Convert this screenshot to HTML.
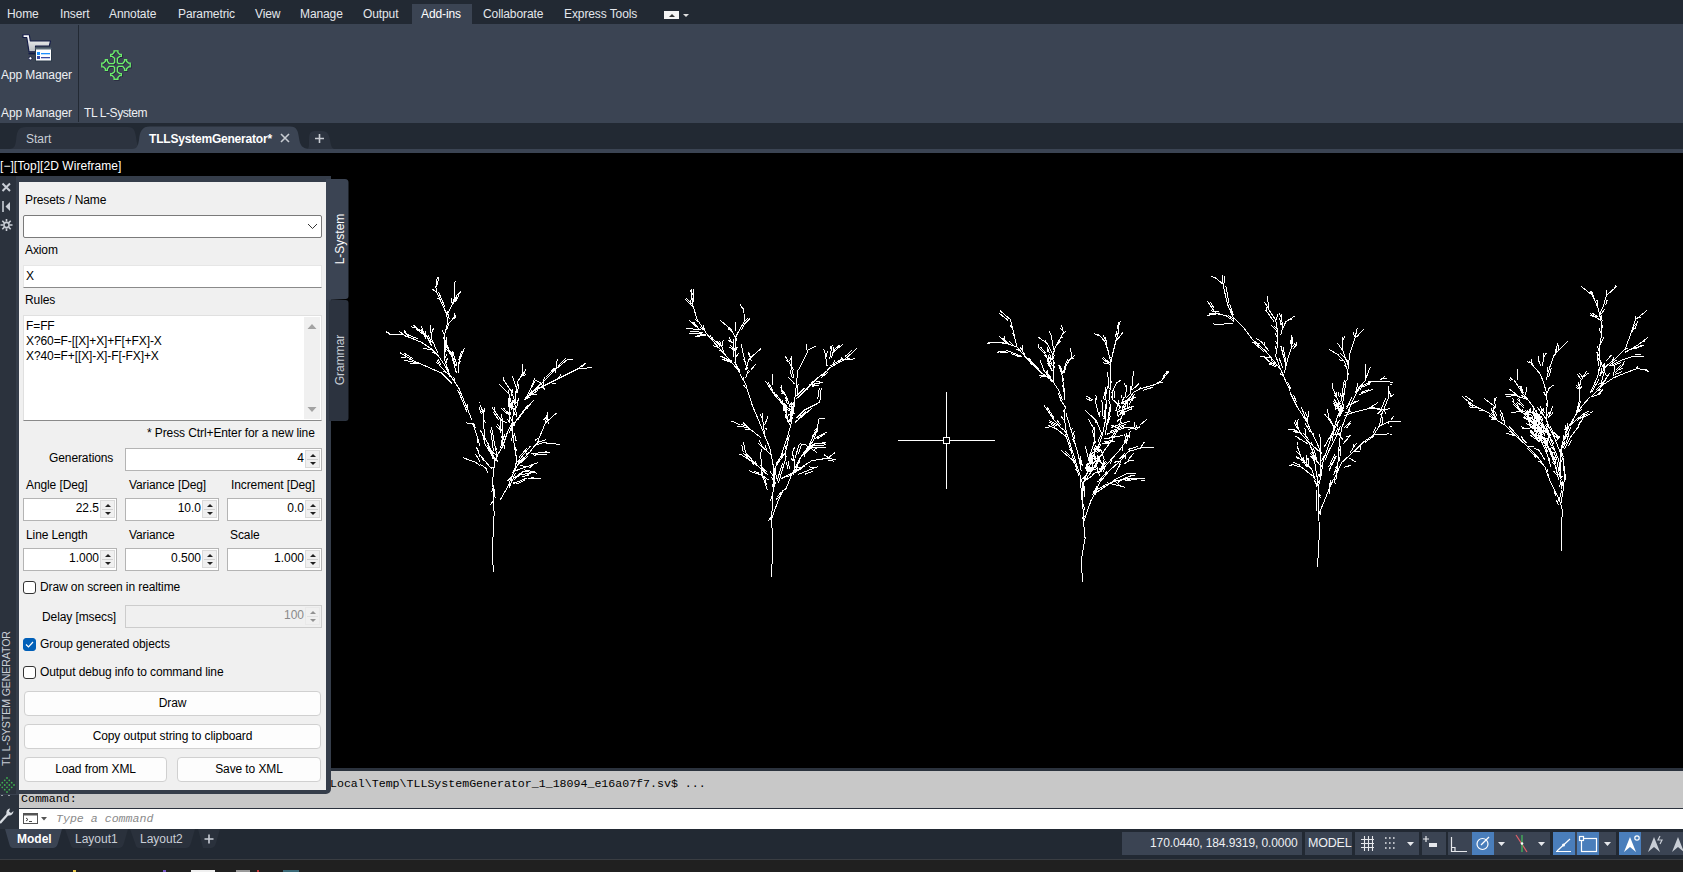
<!DOCTYPE html>
<html><head><meta charset="utf-8">
<style>
*{box-sizing:border-box;margin:0;padding:0}
html,body{width:1683px;height:872px;overflow:hidden;background:#000;font-family:"Liberation Sans",sans-serif;font-size:13px}
.a{position:absolute;white-space:nowrap}
#menubar{position:absolute;left:0;top:0;width:1683px;height:24px;background:#222933}
#menubar .m{position:absolute;top:7px;color:#e4e7ec;font-size:12px;line-height:15px;letter-spacing:-0.1px}
#ribbon{position:absolute;left:0;top:24px;width:1683px;height:99px;background:#3b4453}
#tabbar{position:absolute;left:0;top:123px;width:1683px;height:26px;background:#222933}
#tabline{position:absolute;left:0;top:149px;width:1683px;height:4px;background:#3b4453}
#viewport{position:absolute;left:0;top:153px;width:1683px;height:615px;background:#000}
.lbl{color:#eef0f3;font-size:12px;line-height:15px;letter-spacing:-0.1px}
#pal{position:absolute;left:16px;top:176px;width:315px;height:618px;background:#353d4a;border-radius:0 0 5px 0}
#palstrip{position:absolute;left:0;top:176px;width:16px;height:618px;background:#2b323d}
#palin{position:absolute;left:19px;top:182px;width:307px;height:608px;background:#f0f0f0}
.t{position:absolute;color:#000;font-size:12px;line-height:14px;white-space:nowrap;letter-spacing:-0.1px}
.inp{position:absolute;background:#fff;border:1px solid #b4b4b4}
.spin{position:absolute;width:15px;height:18px;background:#f0f0f0;border:1px solid #dadada}
.spin:before{content:"";position:absolute;left:3.5px;top:2.5px;border-left:3.5px solid transparent;border-right:3.5px solid transparent;border-bottom:3.5px solid #222}
.spin:after{content:"";position:absolute;left:3.5px;top:10.5px;border-left:3.5px solid transparent;border-right:3.5px solid transparent;border-top:3.5px solid #222}
.spin i{position:absolute;left:1px;right:1px;top:8px;height:1px;background:#d0d0d0}
.num{position:absolute;right:17px;top:2px;font-size:12px;line-height:14px;color:#000}
.btn{position:absolute;background:#fdfdfd;border:1px solid #d0d0d0;border-radius:4px;text-align:center;color:#000;font-size:12px;line-height:22px;letter-spacing:-0.1px}
.cb{position:absolute;width:13px;height:13px;border:1px solid #333;border-radius:3px;background:#fff}
.sb{position:absolute;top:832px;height:23px;background:#3b4453}
.ic{position:absolute}
</style></head>
<body>
<div id="menubar">
  <div style="position:absolute;left:412px;top:4px;width:60px;height:20px;background:#3b4453"></div>
  <span class="m" style="left:7px">Home</span>
  <span class="m" style="left:60px">Insert</span>
  <span class="m" style="left:109px">Annotate</span>
  <span class="m" style="left:178px">Parametric</span>
  <span class="m" style="left:255px">View</span>
  <span class="m" style="left:300px">Manage</span>
  <span class="m" style="left:363px">Output</span>
  <span class="m" style="left:421px;color:#fff">Add-ins</span>
  <span class="m" style="left:483px">Collaborate</span>
  <span class="m" style="left:564px">Express Tools</span>
  <div style="position:absolute;left:664px;top:11px;width:15px;height:8px;background:#f4f4f4"></div>
  <div style="position:absolute;left:669px;top:14px;width:0;height:0;border-left:3px solid transparent;border-right:3px solid transparent;border-bottom:3px solid #333"></div>
  <div style="position:absolute;left:683px;top:14px;width:0;height:0;border-left:3px solid transparent;border-right:3px solid transparent;border-top:3px solid #e0e0e0"></div>
</div>
<div id="ribbon"></div>
<div id="ribbonc">
  <svg class="a" style="left:18px;top:30px" width="40" height="36" viewBox="0 0 40 36">
    <defs><linearGradient id="cg" x1="0" y1="0" x2="0" y2="1"><stop offset="0" stop-color="#fff"/><stop offset="1" stop-color="#b8bcc2"/></linearGradient></defs>
    <path d="M5 4.8 L11.3 4.8 L12.3 11 L32.5 11 L31.3 16 L17.5 16 L17.5 21.8 L11 21.8 L8.8 7.5 L5 7.5 Z" fill="url(#cg)" stroke="#141c48" stroke-width="1.1" stroke-linejoin="round"/>
    <path d="M10.5 23.6 H17.5" stroke="#141c48" stroke-width="1.6"/>
    <circle cx="12.4" cy="28.3" r="1.6" fill="#fff" stroke="#141c48" stroke-width="0.9"/>
    <rect x="17.5" y="17.5" width="16" height="13.5" fill="#fff" stroke="#2c3a4a" stroke-width="1"/>
    <rect x="17.5" y="17.5" width="16" height="2" fill="#5c6b7a"/>
    <rect x="19" y="22" width="3" height="3" fill="#1e90ff"/><rect x="23" y="23" width="9" height="1.3" fill="#1e90ff"/>
    <rect x="19" y="26" width="3" height="3" fill="#3a4aa0"/><rect x="23" y="27" width="9" height="1.3" fill="#3a4aa0"/>
  </svg>
  <span class="a lbl" style="left:1px;top:67px;font-size:12px;line-height:16px">App Manager</span>
  <div class="a" style="left:78px;top:25px;width:1px;height:97px;background:#222933"></div>
  <svg class="a" style="left:96px;top:45px" width="40" height="40" viewBox="0 0 40 40"><path d="M18.60 17.40 L18.60 13.30 L16.30 11.40 L14.70 11.40 L14.70 9.40 L16.30 9.40 L18.10 7.50 L18.10 5.80 L21.90 5.80 L21.90 7.50 L23.70 9.40 L25.30 9.40 L25.30 11.40 L23.70 11.40 L21.40 13.30 L21.40 17.40 L22.60 18.60 L26.70 18.60 L28.60 16.30 L28.60 14.70 L30.60 14.70 L30.60 16.30 L32.50 18.10 L34.20 18.10 L34.20 21.90 L32.50 21.90 L30.60 23.70 L30.60 25.30 L28.60 25.30 L28.60 23.70 L26.70 21.40 L22.60 21.40 L21.40 22.60 L21.40 26.70 L23.70 28.60 L25.30 28.60 L25.30 30.60 L23.70 30.60 L21.90 32.50 L21.90 34.20 L18.10 34.20 L18.10 32.50 L16.30 30.60 L14.70 30.60 L14.70 28.60 L16.30 28.60 L18.60 26.70 L18.60 22.60 L17.40 21.40 L13.30 21.40 L11.40 23.70 L11.40 25.30 L9.40 25.30 L9.40 23.70 L7.50 21.90 L5.80 21.90 L5.80 18.10 L7.50 18.10 L9.40 16.30 L9.40 14.70 L11.40 14.70 L11.40 16.30 L13.30 18.60 L17.40 18.60 Z" fill="none" stroke="#1a1530" stroke-width="1.4" transform="translate(0.8,0.8)" opacity="0.6"/><path d="M18.60 17.40 L18.60 13.30 L16.30 11.40 L14.70 11.40 L14.70 9.40 L16.30 9.40 L18.10 7.50 L18.10 5.80 L21.90 5.80 L21.90 7.50 L23.70 9.40 L25.30 9.40 L25.30 11.40 L23.70 11.40 L21.40 13.30 L21.40 17.40 L22.60 18.60 L26.70 18.60 L28.60 16.30 L28.60 14.70 L30.60 14.70 L30.60 16.30 L32.50 18.10 L34.20 18.10 L34.20 21.90 L32.50 21.90 L30.60 23.70 L30.60 25.30 L28.60 25.30 L28.60 23.70 L26.70 21.40 L22.60 21.40 L21.40 22.60 L21.40 26.70 L23.70 28.60 L25.30 28.60 L25.30 30.60 L23.70 30.60 L21.90 32.50 L21.90 34.20 L18.10 34.20 L18.10 32.50 L16.30 30.60 L14.70 30.60 L14.70 28.60 L16.30 28.60 L18.60 26.70 L18.60 22.60 L17.40 21.40 L13.30 21.40 L11.40 23.70 L11.40 25.30 L9.40 25.30 L9.40 23.70 L7.50 21.90 L5.80 21.90 L5.80 18.10 L7.50 18.10 L9.40 16.30 L9.40 14.70 L11.40 14.70 L11.40 16.30 L13.30 18.60 L17.40 18.60 Z" fill="none" stroke="#6cf06c" stroke-width="1.35"/></svg>
  <span class="a lbl" style="left:1px;top:105px;font-size:12px;line-height:16px">App Manager</span>
  <span class="a lbl" style="left:84px;top:105px;font-size:12px;line-height:16px;letter-spacing:-0.4px">TL L-System</span>
</div>

<div id="tabbar"></div>
<svg class="a" style="left:0;top:123px" width="340" height="30" viewBox="0 0 340 30">
  <path d="M8 26 C14 26 15 24 16 18 C17 8 18 4 26 4 L128 4 C134 4 135 8 136 14 C137 22 138 26 145 26 Z" fill="#2c333f"/>
  <path d="M132 26 C137 26 138 23 139 17 C140 8 142 3.5 150 3.5 L290 3.5 C297 3.5 298 8 299 15 C300 22 302 26 310 26 Z" fill="#3b4453"/>
  <path d="M306 26 C309 26 309 24 309 18 C309 10 310 8 316 8 L322 8 C328 8 329 12 330 17 C331 23 332 26 335 26 Z" fill="#2c333f"/>
</svg>
<span class="a" style="left:26px;top:132px;color:#c9ced6;font-size:12px;line-height:15px">Start</span>
<span class="a" style="left:149px;top:132px;color:#fff;font-size:12px;line-height:15px;font-weight:bold;letter-spacing:-0.2px">TLLSystemGenerator*</span>
<svg class="a" style="left:280px;top:133px" width="10" height="10" viewBox="0 0 10 10"><path d="M1 1 L9 9 M9 1 L1 9" stroke="#c8ccd2" stroke-width="1.6"/></svg>
<svg class="a" style="left:314px;top:133px" width="11" height="11" viewBox="0 0 11 11"><path d="M5.5 1 V10 M1 5.5 H10" stroke="#c8ccd2" stroke-width="1.6"/></svg>

<div id="tabline"></div>
<div id="viewport"></div>
<span class="a" style="left:0px;top:159px;color:#fff;font-size:12px;line-height:15px;letter-spacing:0.05px">[−][Top][2D Wireframe]</span>
<svg class="a" style="left:0;top:0" width="1683" height="768" viewBox="0 0 1683 768">
  <path d="M898 440.5 H995 M946.5 392 V489" stroke="#fff" stroke-width="1" shape-rendering="crispEdges"/>
  <rect x="943.5" y="437.5" width="6" height="6" fill="#000" stroke="#fff" stroke-width="1" shape-rendering="crispEdges"/>
  <path d="M437.3 276.5 L435.9 287.2 L436.8 292.4 L446.2 313.0 L447.9 321.6 L445.0 332.8 L444.5 359.4 L448.8 373.2 L459.1 388.7 L472.0 420.0 M432.5 289.3 L436.8 292.4 M454.3 285.1 L455.0 295.8 L452.2 304.4 L447.9 313.0 M457.4 294.1 L453.1 303.5 M455.7 315.6 L448.8 323.3 M388.6 335.0 L402.4 334.5 L421.3 342.2 L431.6 349.1 L438.5 356.0 L445.4 366.3 L450.5 376.6 M398.9 331.1 L405.8 336.2 M404.1 330.2 L408.4 336.2 M412.7 324.7 L426.4 335.4 L431.6 345.7 M421.3 325.9 L425.6 338.8 M430.2 325.4 L431.6 338.8 L437.6 352.6 M423.0 348.3 L431.6 350.0 M399.8 352.6 L414.4 361.2 L441.9 373.2 L452.2 383.5 M404.1 360.3 L417.8 362.9 M410.1 363.7 L418.7 363.7 M464.3 348.3 L459.1 361.2 L458.3 373.2 M444.5 338.8 L452.2 357.7 L456.5 373.2 M450.5 350.8 L455.7 366.3 M436.8 359.4 L440.2 366.3 L448.8 374.9 M592.4 367.5 L577.8 368.9 L552.0 381.8 L534.8 390.4 L525.2 400.0 M585.5 363.4 L576.1 369.8 M567.5 359.4 L557.2 368.0 L545.1 380.1 L529.6 393.8 M557.2 359.4 L555.4 373.2 M534.8 378.4 L531.4 387.0 L524.8 400.0 M540.0 381.8 L545.1 390.4 M534.8 388.7 L543.4 387.0 M526.2 397.3 L538.2 390.4 M522.4 364.3 L522.8 373.2 L517.6 381.8 L515.9 393.8 L514.9 400.0 M526.2 369.4 L521.0 376.6 M498.7 383.5 L509.0 393.8 L510.5 400.0 M503.8 380.1 L510.7 390.4 M512.4 375.8 L515.9 387.0 M479.8 402.4 L480.0 403.1 M493.4 571.9 L492.3 552.1 L494.1 513.6 L493.6 500.0 M480.0 445.7 L472.7 422.8 M462.6 457.6 L475.4 462.2 L480.0 465.6 M475.4 453.9 L480.0 461.4 M476.3 446.6 L480.0 456.7 M466.2 422.8 L475.4 424.6 M500.1 500.0 L507.5 487.2 L514.4 471.1 L517.8 464.2 L529.3 452.8 L537.3 442.4 L545.4 422.9 L547.7 412.0 M545.4 422.9 L556.3 413.2 M537.3 442.4 L546.5 439.6 M536.2 444.7 L544.2 442.4 L548.8 443.6 L559.7 444.2 M530.5 453.3 L550.5 452.5 M517.8 461.9 L530.5 445.9 M517.8 464.2 L528.2 456.2 M514.4 471.1 L538.5 462.5 M511.0 480.3 L523.6 471.1 L536.8 473.2 M513.3 483.7 L527.0 478.0 L540.8 478.3 M520.1 474.5 L530.5 473.4 M514.4 471.1 L516.7 459.6 L514.4 445.9 L512.1 428.7 L513.3 411.5 L512.1 400.0 M511.0 428.7 L517.8 418.3 L533.9 400.0 M517.8 418.3 L528.2 404.6 M493.8 500.0 L492.6 480.3 L494.9 459.6 L502.9 445.9 L507.5 432.1 L512.1 422.9 M494.9 459.6 L488.0 443.6 L480.0 429.8 M494.9 459.6 L484.6 443.6 L483.4 413.8 L485.2 407.5 M480.0 404.6 L483.4 413.8 M491.5 468.8 L480.0 455.0 M486.9 468.8 L480.0 464.2 M497.2 457.3 L491.5 427.5 M500.6 448.2 L502.9 434.4 L501.8 413.8 M497.2 424.1 L502.9 431.0 M492.0 407.5 L500.6 419.5 L506.4 422.9 M501.2 408.6 L507.5 413.8 M508.7 400.0 L509.8 422.9 M514.4 400.0 L516.7 417.2 M507.5 411.5 L514.4 426.4 M693.4 289.5 L692.9 305.8 L697.2 319.6 L707.5 335.0 L723.0 352.3 L733.3 364.3 L740.0 372.6 M685.2 298.9 L692.9 306.7 M689.5 320.4 L698.9 329.0 M686.0 328.2 L700.6 329.9 M689.5 333.3 L705.8 334.2 M695.5 336.8 L705.8 335.0 M719.6 341.1 L723.9 352.3 M719.6 355.7 L731.6 360.9 M722.1 359.1 L731.6 362.6 M743.7 308.4 L744.5 321.3 L738.5 331.6 L735.9 336.8 L735.0 362.6 L740.0 372.5 M749.7 318.7 L743.7 324.7 M720.4 320.4 L731.6 329.9 L735.0 336.8 M735.9 322.1 L735.0 331.6 M728.2 340.2 L734.2 343.7 M729.9 345.4 L735.0 348.8 M741.1 344.5 L746.2 366.0 L745.9 370.0 M760.9 348.8 L748.8 359.1 L746.2 369.5 M755.7 364.3 L750.9 370.0 M748.8 352.3 L751.4 360.9 M731.6 421.1 L740.0 424.8 M791.8 370.0 L791.8 355.7 M784.9 355.7 L793.5 369.5 L793.6 370.0 M806.4 344.5 L807.3 352.3 L798.7 369.5 L798.6 370.0 M815.9 346.2 L807.3 350.5 M856.8 348.5 L845.1 359.1 L829.7 367.7 L827.4 370.0 M855.5 358.8 L840.0 360.0 L830.5 366.0 M842.6 344.5 L833.1 352.3 M832.2 344.5 L829.7 359.1 M824.5 349.7 L827.1 366.0 M771.5 577.1 L772.9 541.8 L771.5 519.5 L772.9 495.4 L773.1 490.0 M771.5 519.5 L778.1 500.5 L783.3 490.0 M739.3 454.1 L740.0 454.4 M740.0 374.1 L745.5 383.8 L752.4 405.8 L760.6 425.0 L764.8 436.1 L769.6 447.1 L773.0 463.6 L773.7 490.0 M748.3 370.0 L745.5 378.3 M740.0 426.4 L748.3 427.8 L760.6 437.4 M742.8 422.3 L748.3 427.8 M762.0 413.3 L764.8 436.1 M768.2 415.4 L764.8 425.0 M765.5 427.8 L767.5 430.5 M757.9 442.9 L771.6 455.3 M743.4 442.2 L745.5 452.6 L755.1 463.6 L767.5 474.6 M740.0 453.9 L755.1 463.6 M751.0 471.8 L760.6 474.6 L768.9 480.1 M760.6 452.6 L762.0 474.6 L767.5 490.0 M773.7 490.0 L775.8 466.3 L781.3 455.3 L786.8 438.8 L790.9 425.0 L792.3 411.3 L795.0 397.5 L796.4 383.8 L797.8 370.0 M775.8 466.3 L785.4 452.6 L789.5 434.7 M765.5 381.0 L774.4 394.8 L782.7 404.4 L786.8 415.4 L789.5 425.0 M772.3 374.1 L773.0 385.1 M779.9 386.5 L786.8 397.5 L789.5 405.8 M781.3 390.6 L785.4 393.4 M788.2 376.9 L794.4 383.8 M792.3 370.0 L793.7 378.3 M796.4 398.9 L806.1 389.3 L817.1 378.3 L828.1 370.0 M808.8 385.1 L822.6 382.4 M796.4 418.2 L804.7 409.9 L819.8 402.3 M819.8 402.3 L821.2 387.9 M795.0 422.3 L811.6 408.5 M785.4 490.0 L792.3 473.2 L799.2 459.4 L807.4 449.8 L814.3 438.8 L817.1 429.2 L819.1 418.2 M819.1 418.2 L825.3 418.2 M814.3 438.8 L826.7 431.9 M811.6 444.3 L826.0 442.9 M808.8 447.1 L826.0 447.5 M807.4 449.8 L814.3 433.3 L818.4 430.5 M799.2 459.4 L804.7 451.2 L810.2 445.0 M792.3 473.2 L811.6 460.8 L828.1 458.1 L836.3 460.1 M828.1 458.1 L834.9 452.6 M797.8 474.6 L818.4 466.3 M781.3 478.7 L804.7 466.3 M792.3 452.6 L795.0 463.6 L793.7 474.6 M788.2 460.8 L789.5 469.1 M799.2 444.3 L795.0 458.1 M778.5 482.8 L785.4 459.4 L785.4 452.6 M784.0 403.0 L788.2 422.3 M792.3 403.0 L789.5 422.3 M785.4 408.5 L795.0 414.0 M804.7 444.3 L817.1 452.6 M806.1 452.6 L815.7 442.9 M1000.1 310.8 L1010.5 319.6 L1012.1 326.1 L1016.9 346.9 L1026.5 358.2 L1041.0 372.6 L1052.2 380.6 L1058.7 390.3 L1062.4 400.0 M988.0 342.1 L1004.1 342.9 L1016.9 346.9 M999.3 336.5 L1007.3 343.7 M998.5 351.4 L1008.1 350.9 L1021.7 356.5 M1002.5 338.1 L1010.5 345.3 M1020.1 346.9 L1024.9 354.9 M1038.6 337.3 L1047.4 343.7 L1052.2 353.3 L1053.8 366.2 L1053.8 382.2 M1050.6 332.5 L1053.8 350.1 M1061.4 325.2 L1063.5 332.5 L1055.4 346.9 L1053.0 354.9 M1038.6 347.7 L1045.8 354.9 L1052.2 371.0 M1040.2 360.6 L1044.2 371.0 L1050.6 379.0 M1070.7 347.7 L1071.5 358.2 L1065.1 366.2 L1062.7 374.2 M1074.7 355.7 L1067.5 361.4 M1058.7 364.6 L1061.9 374.2 L1064.3 390.3 L1064.3 400.0 M1039.4 375.0 L1050.6 377.4 M1118.4 322.0 L1118.8 330.9 L1116.4 338.9 L1112.4 354.9 L1110.0 367.8 L1110.0 390.3 L1109.0 400.0 M1122.9 332.5 L1118.0 338.9 M1098.5 334.1 L1105.2 342.1 L1108.4 351.7 L1110.8 363.0 M1105.2 337.3 L1106.8 343.7 M1102.0 358.2 L1110.0 364.6 M1117.2 381.4 L1111.6 393.5 M1107.6 386.2 L1104.9 400.0 M1112.4 390.3 L1112.4 400.0 M1085.9 395.9 L1093.0 400.0 M1095.9 395.1 L1096.5 400.0 M1169.4 370.7 L1161.4 380.6 L1155.0 384.6 L1140.5 388.7 L1134.1 391.9 L1127.7 399.9 L1127.6 400.0 M1161.4 382.2 L1151.7 385.4 M1133.3 371.0 L1132.5 383.8 L1130.1 393.5 M1138.9 383.8 L1131.7 390.3 M1126.9 385.4 L1125.3 396.7 M1146.6 419.5 L1140.0 425.1 M1144.5 441.6 L1140.5 448.0 L1140.0 448.1 M1154.2 447.2 L1140.5 448.0 M1121.3 399.9 L1121.2 400.0 M1124.5 396.7 L1122.8 400.0 M1082.4 581.6 L1081.4 559.1 L1085.1 538.3 L1083.5 522.2 L1082.7 501.4 L1082.6 500.0 M1083.5 522.2 L1091.2 500.0 M1145.3 478.6 L1140.0 478.6 M1060.6 400.0 L1065.2 406.9 L1064.1 417.2 L1066.4 432.1 L1073.3 453.9 L1080.1 475.7 L1081.9 500.0 M1044.0 405.2 L1053.8 419.5 L1060.6 427.5 L1066.4 432.1 M1049.2 420.6 L1059.5 425.8 M1048.0 425.2 L1056.1 428.7 L1066.4 436.7 M1065.8 412.6 L1077.8 452.8 L1081.3 471.1 M1061.2 450.5 L1072.1 459.6 L1077.8 468.8 M1072.1 455.0 L1079.0 475.7 M1082.4 500.0 L1083.6 482.6 L1089.3 466.5 L1095.0 451.6 L1099.6 443.6 L1102.5 434.4 L1105.4 420.6 L1106.5 400.0 M1085.3 410.3 L1096.2 420.6 L1101.9 434.4 M1088.2 418.9 L1093.9 428.7 L1095.0 439.0 L1090.5 453.9 M1095.0 400.0 L1097.3 409.2 L1099.6 417.2 M1085.3 446.4 L1089.3 461.9 M1101.9 400.0 L1103.1 417.2 M1093.9 450.5 L1097.3 468.8 L1099.6 475.7 M1100.8 449.3 L1104.2 459.6 L1099.6 473.4 M1108.8 400.0 L1111.1 406.9 L1108.8 417.2 L1107.7 425.2 M1083.6 482.6 L1091.6 471.1 L1101.9 453.9 L1111.1 441.3 L1118.0 429.8 L1122.6 413.8 L1127.2 400.0 M1122.6 410.3 L1133.5 406.3 M1111.1 427.5 L1129.4 421.2 M1106.5 434.4 L1124.9 427.5 L1135.2 428.1 M1104.2 439.0 L1122.6 435.6 M1102.5 443.6 L1114.5 441.3 M1134.0 424.1 L1135.8 429.8 L1139.8 426.9 M1091.6 500.0 L1099.6 482.6 L1108.8 471.1 L1120.3 460.8 L1128.3 451.6 L1139.8 448.2 M1099.6 472.2 L1111.1 459.6 L1120.3 449.3 L1127.2 439.0 L1130.6 431.0 M1126.6 433.3 L1124.9 443.6 M1134.0 452.8 L1128.3 459.6 M1128.3 460.2 L1134.0 460.2 M1120.3 464.2 L1114.5 474.5 M1093.9 494.0 L1111.1 482.6 L1122.6 479.1 L1139.8 478.6 M1106.5 482.6 L1124.9 487.2 M1113.4 480.3 L1126.0 474.0 L1135.8 473.4 M1122.6 479.1 L1131.7 475.7 M1090.5 457.3 L1099.6 461.9 M1088.2 468.8 L1097.3 466.5 M1091.6 474.5 L1099.6 471.1 M1085.9 480.3 L1093.9 474.5 M1097.3 455.0 L1101.9 464.2 M1113.4 400.0 L1120.3 406.9 M1119.1 400.0 L1115.7 411.5 M1222.4 275.2 L1223.2 285.5 L1227.5 304.4 L1232.7 316.4 L1243.0 326.8 L1253.3 340.5 L1265.4 350.8 L1274.0 361.2 L1280.8 369.8 L1286.0 381.8 L1290.0 390.5 M1214.6 276.9 L1222.4 283.8 M1207.2 301.0 L1215.5 313.0 L1225.8 315.6 L1234.4 321.6 M1208.6 313.0 L1222.4 314.4 M1216.3 324.7 L1232.7 323.3 M1251.6 342.2 L1260.2 344.0 M1261.1 341.4 L1268.8 350.8 M1260.2 356.5 L1270.5 357.7 M1264.5 356.9 L1268.8 361.2 L1277.4 366.3 M1267.4 295.8 L1268.8 309.6 L1275.7 319.9 L1277.4 330.2 L1277.4 345.7 L1275.7 356.0 L1280.8 369.8 L1284.3 376.6 M1264.5 301.8 L1268.8 309.6 M1265.4 309.6 L1274.0 321.6 M1281.2 314.4 L1282.6 326.8 L1280.8 335.4 M1295.5 315.6 L1286.0 321.6 L1282.6 328.5 M1271.4 325.0 L1277.4 331.9 M1291.2 335.4 L1292.0 345.7 L1287.7 359.4 L1284.3 373.2 M1297.2 344.0 L1292.9 349.1 M1280.8 345.7 L1286.0 366.3 M1357.4 327.6 L1354.8 338.8 L1349.6 354.3 L1347.9 369.8 L1347.1 380.0 M1364.3 328.5 L1356.5 337.1 M1342.4 337.1 L1342.8 350.8 L1347.9 364.6 M1337.6 343.1 L1342.8 350.8 M1329.0 349.5 L1337.6 354.3 L1344.5 361.2 L1347.9 371.5 M1384.9 376.6 L1379.9 380.0 M1392.6 382.7 L1390.0 382.5 M1365.1 363.7 L1366.0 378.4 L1365.4 380.0 M1370.3 367.2 L1365.2 380.0 M1394.4 393.8 L1390.0 397.1 M1393.5 416.2 L1390.9 420.0 M1317.5 567.1 L1319.5 531.8 L1318.7 514.6 L1318.7 488.8 L1317.2 480.0 M1318.7 514.6 L1330.7 485.4 L1333.1 480.0 M1318.7 488.8 L1319.3 480.0 M1330.7 485.4 L1330.3 480.0 M1390.0 421.7 L1401.2 421.4 M1391.8 434.6 L1390.0 434.5 M1391.8 426.0 L1390.0 426.6 M1314.3 480.0 L1317.0 485.4 M1290.0 392.6 L1296.9 406.4 L1307.2 422.4 L1312.9 435.0 L1317.5 444.2 L1321.0 453.4 L1320.4 480.0 M1301.5 407.5 L1307.2 422.4 M1308.9 411.0 L1307.2 422.4 M1295.2 420.1 L1300.3 432.8 L1308.3 441.9 L1316.4 448.8 M1293.4 429.3 L1301.5 433.9 M1295.7 436.2 L1308.3 444.2 M1304.9 428.2 L1306.1 437.3 M1308.3 440.8 L1312.9 451.1 M1296.9 445.4 L1301.5 458.0 L1311.8 469.4 L1315.2 480.0 M1296.3 456.3 L1304.9 462.6 M1291.1 464.3 L1301.5 467.2 L1311.8 475.2 M1306.1 455.1 L1307.2 467.2 M1319.8 433.9 L1321.0 453.4 M1315.8 448.8 L1322.1 453.4 M1312.9 451.1 L1317.5 480.0 M1320.4 480.0 L1323.3 460.3 L1329.0 444.2 L1333.6 430.5 L1337.0 417.8 L1342.8 402.9 L1346.2 380.0 M1324.4 413.8 L1332.4 423.6 L1334.7 430.5 M1327.3 409.2 L1329.0 417.8 L1332.4 423.6 M1332.4 387.5 L1338.2 400.6 L1339.3 414.4 M1335.9 391.5 L1337.0 398.3 M1340.5 392.6 L1341.6 400.6 M1333.6 400.6 L1335.9 408.7 M1324.4 446.5 L1333.6 430.5 L1339.3 420.1 M1327.8 453.4 L1335.9 437.3 L1340.5 425.9 M1329.0 470.6 L1335.9 455.7 M1335.9 480.0 L1338.2 460.3 L1339.3 441.9 L1341.6 428.2 L1347.3 413.3 L1354.2 397.2 L1360.0 386.9 L1365.7 380.0 M1357.7 383.4 L1355.9 392.6 M1360.0 386.9 L1372.6 381.1 L1390.0 381.1 M1358.8 394.9 L1372.6 389.2 M1346.2 406.4 L1358.8 400.6 M1343.9 428.2 L1351.4 420.7 M1342.8 444.2 L1350.8 435.0 M1343.9 415.6 L1354.2 412.1 L1368.0 408.7 L1378.3 402.4 M1368.0 408.7 L1381.7 409.2 M1330.1 463.7 L1334.7 454.5 M1333.6 480.0 L1341.6 462.6 L1354.2 451.1 L1363.4 441.9 L1373.7 435.0 L1379.4 425.9 L1389.8 421.3 M1373.7 435.0 L1388.6 433.9 M1379.4 425.9 L1381.7 414.4 L1388.6 397.2 L1388.6 385.7 M1381.7 409.8 L1390.0 408.7 M1354.2 451.1 L1360.0 451.1 M1349.6 458.0 L1355.4 462.0 M1343.9 467.2 L1350.8 465.4 M1356.5 443.1 L1349.6 453.4 M1333.6 402.9 L1342.8 412.1 M1334.7 409.8 L1341.6 405.2 M1335.9 430.5 L1342.8 439.6 M1337.0 435.0 L1341.6 431.6 M1309.5 444.2 L1316.4 460.3 M1310.6 453.4 L1319.8 464.9 M1581.4 286.5 L1592.6 295.5 L1597.8 307.5 L1601.2 321.3 L1601.2 336.8 L1599.5 348.8 L1600.3 366.0 L1597.8 376.3 L1590.9 391.8 L1590.0 393.4 M1616.7 286.5 L1606.4 295.5 L1602.9 307.5 L1599.5 314.4 M1606.4 289.5 L1606.4 297.2 M1591.7 291.2 L1594.3 298.9 M1596.9 299.8 L1597.8 305.8 M1590.0 313.5 L1599.5 319.6 M1603.8 337.6 L1599.5 345.4 M1596.9 345.4 L1599.5 352.2 M1646.8 310.6 L1635.6 319.6 L1632.2 329.9 L1625.3 348.8 L1616.7 357.4 L1606.4 366.0 L1599.5 376.3 M1635.6 316.1 L1635.6 321.3 M1647.6 337.6 L1637.3 345.4 L1625.3 352.2 M1644.2 345.4 L1627.0 350.5 M1644.2 356.5 L1632.2 356.5 L1620.1 360.8 L1609.8 366.0 M1611.5 354.8 L1606.4 360.8 M1648.5 370.3 L1637.3 368.6 L1625.3 372.9 L1613.2 378.0 L1602.9 384.9 L1590.9 397.0 M1638.2 365.7 L1635.6 369.4 M1624.4 363.9 L1615.0 372.9 M1615.0 366.0 L1613.2 376.3 M1601.2 393.5 L1590.9 397.0 M1592.6 411.6 L1590.0 412.7 M1604.6 369.4 L1601.2 383.2 M1609.8 372.9 L1602.9 383.2 L1596.0 390.1 M1606.4 379.8 L1597.8 384.9 M1601.2 362.6 L1606.4 376.3 M1586.6 371.2 L1581.4 379.8 L1581.4 380.0 M1577.5 374.3 L1581.4 379.8 M1567.7 341.4 L1558.2 350.5 L1553.9 355.7 L1549.6 367.7 L1546.2 379.8 L1546.1 380.0 M1557.3 342.8 L1556.5 352.2 M1528.6 360.5 L1539.3 372.9 L1542.8 380.0 M1543.6 353.1 L1542.7 366.0 M1537.6 359.5 L1541.0 366.0 M1517.3 368.6 L1517.7 380.0 M1510.0 377.7 L1512.8 380.0 M1462.2 396.6 L1473.9 405.6 L1490.0 413.6 M1468.8 406.9 L1479.1 408.1 M1483.4 397.8 L1490.0 402.8 M1561.6 550.7 L1561.6 521.5 L1562.5 511.2 L1560.8 504.3 L1558.2 497.4 L1549.5 480.0 M1560.8 504.3 L1563.4 488.8 L1564.2 480.0 M1561.6 488.8 L1560.8 480.0 M1490.0 414.4 L1496.9 420.1 L1506.1 425.9 L1518.7 438.5 L1527.8 446.5 L1539.3 459.1 L1545.0 467.2 L1549.6 480.0 M1494.6 398.3 L1495.2 406.4 L1492.3 413.3 M1490.0 402.9 L1494.6 406.4 M1491.1 408.7 L1496.9 420.1 M1502.0 413.3 L1504.9 423.6 M1506.1 433.3 L1516.4 436.2 M1521.0 436.2 L1524.4 440.8 M1527.8 446.5 L1533.6 446.5 M1514.1 380.0 L1522.1 392.6 L1527.8 399.5 L1533.6 407.5 L1539.3 416.7 L1543.9 425.9 L1549.6 437.3 L1554.2 448.8 L1558.8 460.3 L1561.1 480.0 M1509.5 389.2 L1519.8 397.2 L1527.8 399.5 M1504.9 394.9 L1516.4 394.9 M1521.0 386.3 L1523.3 392.6 M1526.7 386.9 L1525.6 394.9 M1512.4 401.2 L1524.4 414.4 L1529.0 419.0 M1517.5 399.5 L1524.4 406.4 M1511.2 412.7 L1523.3 411.0 L1530.1 414.4 M1522.1 428.7 L1530.1 428.2 M1525.6 423.6 L1535.9 425.9 M1526.7 413.3 L1533.6 423.6 L1539.3 432.8 L1547.3 444.2 L1551.9 454.5 L1555.4 466.0 L1558.8 480.0 M1531.3 416.7 L1538.2 428.2 L1543.9 439.6 L1549.6 451.1 L1554.2 462.6 M1533.6 414.4 L1541.6 423.6 L1547.3 432.8 L1554.2 444.2 M1535.9 432.8 L1542.8 444.2 L1547.3 454.5 L1550.8 467.2 M1539.3 425.9 L1545.0 435.0 M1530.1 431.6 L1538.2 439.6 M1538.2 448.8 L1545.0 460.3 M1542.8 380.0 L1546.2 391.5 L1547.3 402.9 L1546.2 419.0 L1548.5 425.9 L1554.2 437.3 L1558.8 448.8 L1563.4 460.3 L1565.7 480.0 M1549.6 386.9 L1546.8 393.8 M1552.5 406.4 L1548.5 417.8 M1540.5 406.4 L1542.8 414.4 L1546.2 419.0 M1537.0 406.9 L1542.8 414.4 M1554.2 432.8 L1558.8 437.3 M1560.0 436.2 L1555.4 441.9 M1580.6 380.0 L1579.4 389.2 L1579.4 400.6 L1576.0 414.4 L1569.1 425.9 L1563.4 439.6 L1561.1 448.8 L1560.0 480.0 M1576.6 385.2 L1579.4 389.2 M1589.8 397.2 L1581.7 406.4 L1576.0 414.4 M1588.6 411.0 L1582.9 414.4 L1576.0 420.1 L1570.3 425.9 M1589.8 414.4 L1581.7 417.8 M1568.0 423.6 L1565.7 432.8 M1585.2 414.4 L1577.2 428.2 L1570.3 437.3 L1564.5 448.8 M1565.7 444.2 L1569.1 432.8 M1563.4 460.3 L1564.5 480.0" stroke="#fff" stroke-width="1" fill="none" stroke-linejoin="round" shape-rendering="crispEdges"/><path d="M439.0 276.9 L436.6 286.8 M438.6 292.1 L444.7 306.6 M448.5 314.1 L449.1 319.0 M449.3 322.5 L446.7 330.2 M446.6 337.2 L445.2 352.0 M458.5 391.6 L467.3 412.5 M440.3 300.0 L437.3 298.0 M446.8 315.9 L447.5 311.5 M444.5 358.9 L446.9 353.8 M444.7 350.4 L446.3 346.1 M444.9 341.0 L442.6 336.5 M444.9 336.6 L442.5 330.4 M445.8 363.6 L447.6 357.6 M454.3 381.4 L453.9 376.9 M452.0 377.9 L448.9 375.5 M467.7 409.5 L468.0 404.1 M461.6 394.6 L456.9 390.2 M454.3 285.2 L455.3 281.0 M452.2 304.4 L451.3 297.7 M459.0 295.3 L455.2 301.9 M454.9 299.5 L458.1 296.7 M456.9 295.3 L461.2 291.5 M452.1 319.6 L456.5 316.9 M454.1 317.4 L454.9 313.4 M407.5 334.6 L417.8 338.9 M391.9 334.9 L385.8 331.6 M409.0 337.2 L404.3 332.4 M436.9 354.4 L432.4 352.4 M448.2 371.9 L448.5 368.6 M415.8 328.8 L424.7 335.5 M427.9 335.1 L431.7 342.4 M422.6 332.4 L420.9 328.4 M417.2 328.2 L410.6 326.8 M425.0 337.2 L425.7 331.2 M431.1 333.8 L433.6 328.1 M433.3 342.7 L428.1 339.4 M403.9 352.9 L413.0 358.8 M411.7 359.6 L408.6 358.8 M407.3 357.0 L400.7 357.1 M410.5 361.4 L416.4 362.9 M418.1 363.7 L412.5 360.2 M461.6 351.2 L458.5 360.4 M458.9 364.6 L460.5 361.2 M444.7 342.4 L450.6 354.8 M448.4 348.3 L445.5 346.6 M448.3 348.1 L446.0 345.4 M453.5 362.1 L454.3 358.9 M452.3 350.6 L457.0 365.5 M454.2 361.9 L452.1 359.1 M452.2 356.0 L453.5 352.1 M451.3 353.3 L445.7 349.3 M438.4 359.4 L440.8 364.5 M439.0 363.9 L436.2 362.5 M446.6 372.7 L442.9 371.4 M558.3 378.6 L561.3 373.6 M535.5 390.0 L539.3 384.7 M550.1 382.8 L555.7 383.5 M526.4 398.8 L529.6 396.9 M530.0 395.2 L536.8 394.2 M580.6 366.7 L584.2 365.7 M565.7 358.5 L558.3 366.0 M554.3 368.1 L546.4 377.0 M566.9 359.9 L572.7 359.1 M551.6 373.6 L554.9 368.2 M543.3 381.7 L544.7 376.6 M535.3 380.5 L532.1 387.2 M531.8 390.5 L526.4 398.9 M543.2 387.2 L543.4 380.8 M540.6 382.8 L534.5 379.6 M518.9 384.4 L517.4 392.8 M520.7 376.6 L524.7 373.4 M515.8 394.5 L515.1 391.2 M521.4 376.1 L525.8 374.7 M508.5 393.4 L508.0 389.9 M504.2 380.6 L503.5 377.0 M493.6 500.4 L490.5 504.8 M472.7 423.0 L475.7 427.8 M478.1 439.8 L477.6 443.5 M478.7 453.0 L479.1 449.5 M509.7 486.4 L515.6 472.7 M521.0 463.0 L526.8 456.9 M547.5 421.5 L547.9 414.8 M512.1 476.6 L507.8 480.8 M509.2 483.3 L509.4 488.5 M529.7 452.2 L525.6 454.6 M539.3 437.7 L535.0 440.3 M546.6 417.1 L543.6 419.7 M546.3 418.3 L548.7 423.7 M539.3 441.8 L537.1 444.0 M534.0 455.1 L546.9 454.3 M549.0 452.6 L544.9 451.3 M537.9 453.0 L533.4 454.3 M518.9 457.5 L527.5 447.6 M527.2 450.0 L523.1 451.6 M520.1 459.1 L517.7 465.5 M517.6 462.5 L526.9 455.4 M521.9 461.1 L518.6 461.2 M533.6 464.3 L529.3 468.2 M526.7 466.7 L519.8 465.4 M514.2 479.5 L521.7 473.4 M524.1 469.9 L534.7 471.8 M516.1 484.1 L525.1 480.2 M515.8 482.6 L512.7 483.1 M534.4 478.2 L531.4 477.1 M522.3 476.8 L528.4 475.1 M530.4 473.4 L526.7 474.7 M516.2 441.4 L514.5 433.0 M511.2 410.5 L511.1 402.5 M516.5 460.8 L516.9 464.0 M514.9 468.5 L512.7 472.7 M514.5 446.4 L516.6 450.5 M513.0 435.2 L511.0 440.5 M512.2 427.8 L510.6 431.5 M512.3 401.5 L511.4 405.4 M513.2 410.8 L515.2 414.9 M515.1 422.5 L511.8 423.6 M520.7 415.1 L518.2 419.9 M527.9 404.9 L527.0 408.9 M495.1 497.7 L493.6 485.3 M501.4 443.5 L504.8 434.4 M509.3 432.8 L512.0 426.1 M493.1 487.9 L491.7 491.8 M503.6 444.0 L505.0 448.5 M511.8 423.5 L511.4 430.0 M493.4 459.4 L487.7 444.9 M491.1 450.8 L496.2 455.2 M493.7 456.9 L498.1 461.5 M482.4 434.0 L484.3 440.4 M481.8 412.1 L483.3 408.5 M487.8 448.6 L490.7 450.6 M490.5 452.8 L494.3 456.4 M483.6 418.8 L485.6 423.2 M484.5 409.9 L481.5 413.6 M478.8 406.5 L481.3 413.4 M481.4 456.7 L483.4 461.0 M490.1 467.1 L494.2 468.2 M485.2 467.7 L488.0 473.1 M493.5 451.3 L490.6 429.7 M495.1 446.3 L497.0 450.3 M497.1 456.8 L495.1 461.2 M502.3 447.3 L503.4 436.5 M500.8 432.8 L500.7 418.0 M502.1 439.7 L503.5 443.9 M502.9 434.4 L500.8 438.3 M496.3 426.1 L501.5 431.1 M493.2 411.9 L498.8 420.1 M495.1 411.7 L494.1 407.4 M503.6 421.3 L500.7 420.3 M503.4 408.0 L507.1 412.2 M509.8 422.9 L507.2 418.8 M509.5 416.4 L510.9 412.6 M509.1 407.8 L511.3 402.9 M515.9 411.5 L513.4 407.6 M515.1 405.4 L513.3 400.5 M513.9 425.4 L514.5 421.7 M691.3 289.4 L690.9 305.0 M711.7 337.3 L720.2 346.6 M735.6 364.7 L740.1 370.5 M693.0 302.3 L691.9 297.4 M693.2 295.4 L689.9 290.5 M704.4 330.4 L703.6 325.3 M704.0 329.8 L700.3 327.7 M698.5 321.5 L695.3 319.7 M722.6 351.8 L719.4 350.2 M719.0 347.8 L713.3 345.9 M713.0 341.1 L710.2 334.9 M686.2 298.1 L693.5 305.5 M692.6 321.5 L698.4 327.5 M697.3 327.5 L693.9 322.5 M689.7 331.1 L703.5 332.5 M702.7 334.0 L698.9 335.7 M696.8 335.3 L704.0 334.8 M721.8 347.0 L723.2 340.4 M721.4 345.7 L716.4 340.9 M729.6 360.0 L725.1 360.0 M723.6 357.9 L730.4 361.3 M745.3 323.1 L741.5 329.7 M733.7 338.7 L734.0 356.6 M743.8 310.0 L739.9 304.3 M735.2 357.6 L738.9 353.0 M735.4 352.4 L734.4 349.0 M735.4 350.7 L737.1 347.3 M735.8 340.9 L737.1 338.1 M748.1 317.7 L743.5 322.8 M732.6 331.8 L727.9 328.7 M731.7 342.2 L728.9 337.4 M728.9 346.9 L734.1 350.0 M747.9 366.7 L746.5 370.1 M745.2 361.8 L743.1 359.2 M748.4 360.8 L752.7 355.6 M750.4 357.6 L748.1 353.5 M791.8 357.3 L788.8 361.4 M791.8 368.6 L790.3 371.9 M788.8 361.9 L785.6 360.4 M852.0 350.1 L845.2 356.5 M839.5 362.3 L842.2 356.5 M844.3 359.6 L847.8 359.8 M840.0 360.0 L843.4 357.8 M845.9 359.5 L850.4 357.8 M832.4 364.8 L835.3 359.8 M839.7 345.0 L833.5 350.4 M834.1 347.0 L831.7 357.6 M831.2 350.6 L830.7 346.4 M825.8 358.0 L827.5 351.4 M824.8 351.6 L823.6 348.7 M771.7 515.5 L768.6 521.0 M772.9 494.4 L770.2 500.8 M777.5 497.1 L781.2 491.6 M772.0 518.1 L769.7 520.4 M780.2 496.3 L775.6 499.6 M743.7 380.5 L743.6 376.9 M747.3 389.6 L743.4 384.8 M758.0 418.8 L757.4 415.7 M773.5 481.1 L771.5 476.9 M773.4 476.0 L770.1 471.6 M773.1 465.3 L771.9 462.0 M747.1 373.6 L749.9 371.1 M740.6 424.3 L747.7 426.1 M740.3 426.5 L737.2 426.6 M751.1 430.0 L744.8 429.8 M762.7 419.2 L760.1 414.3 M766.8 450.9 L765.4 445.2 M761.8 446.4 L759.3 440.0 M741.8 444.5 L743.3 452.5 M744.8 454.1 L753.8 464.3 M759.9 464.8 L766.7 471.4 M765.2 472.6 L762.2 467.4 M756.8 465.0 L755.2 461.5 M743.3 453.4 L752.2 459.1 M752.2 461.7 L750.2 457.0 M753.7 471.2 L758.9 473.2 M751.4 471.9 L748.7 469.8 M764.4 476.4 L766.4 484.8 M760.7 453.8 L761.7 449.1 M762.3 475.4 L762.2 471.7 M772.7 487.3 L774.7 468.3 M797.2 395.1 L798.1 384.1 M775.3 472.0 L776.7 478.7 M774.5 481.4 L776.0 484.2 M784.7 445.1 L786.4 450.5 M782.0 453.1 L782.5 457.5 M776.5 463.0 L782.6 454.4 M778.7 462.1 L775.5 464.3 M789.0 436.9 L787.4 439.6 M767.9 381.9 L772.8 390.4 M775.8 394.1 L782.2 402.4 M775.4 396.0 L774.2 392.1 M786.3 414.1 L786.2 407.5 M783.2 405.9 L782.8 400.4 M785.9 400.3 L787.5 404.1 M784.1 393.3 L781.6 391.1 M781.3 388.7 L781.2 385.0 M787.7 400.2 L785.0 397.6 M781.1 393.3 L784.0 394.1 M790.1 371.6 L792.3 378.1 M796.6 395.7 L804.7 388.0 M821.0 377.9 L828.4 371.9 M813.9 381.5 L811.0 382.6 M808.8 386.5 L807.1 389.8 M826.7 371.0 L822.4 376.2 M812.1 386.4 L819.3 384.9 M821.7 382.6 L815.9 380.9 M814.8 383.9 L811.7 386.3 M798.4 419.3 L806.0 411.3 M817.8 399.0 L819.3 388.3 M804.6 414.3 L800.2 416.0 M795.0 471.1 L798.5 463.1 M813.6 436.6 L815.4 431.1 M786.5 487.3 L784.5 489.7 M798.4 461.0 L797.3 466.3 M805.5 452.1 L804.0 456.9 M816.0 432.7 L811.9 436.3 M817.4 427.6 L814.4 430.5 M816.9 439.0 L825.0 433.6 M813.0 446.0 L826.0 444.8 M825.5 443.0 L822.4 442.0 M819.0 447.3 L813.7 449.4 M813.4 447.2 L809.2 444.3 M799.9 458.4 L798.9 463.5 M808.0 447.5 L806.0 453.3 M828.3 460.3 L834.4 461.3 M798.3 469.3 L794.2 470.1 M829.5 458.4 L824.3 454.8 M804.6 474.4 L812.9 471.2 M815.7 467.4 L808.7 466.9 M786.6 477.3 L801.0 468.8 M802.8 467.3 L796.0 467.2 M799.1 469.3 L794.4 469.5 M794.6 461.8 L790.9 458.4 M792.4 453.1 L794.7 446.6 M786.0 461.7 L788.0 468.9 M801.2 445.0 L798.2 454.4 M777.0 480.9 L782.8 462.7 M785.4 453.6 L786.2 456.9 M786.7 407.4 L793.2 411.2 M805.4 444.8 L800.0 443.8 M806.8 449.9 L813.0 444.2 M998.7 312.9 L1008.0 320.3 M1028.2 358.0 L1038.6 368.9 M1057.9 392.8 L1061.4 400.6 M1014.5 336.4 L1012.6 333.4 M1012.7 328.4 L1009.6 324.7 M1020.0 350.5 L1015.7 349.0 M1033.9 365.6 L1029.7 363.4 M1031.2 362.8 L1029.8 358.3 M1053.0 381.8 L1049.5 379.8 M992.4 342.3 L987.0 344.0 M1013.3 345.8 L1009.4 341.2 M1005.9 343.5 L1002.4 343.5 M1005.7 342.3 L1003.9 336.0 M999.6 352.8 L1007.6 352.5 M1011.0 353.8 L1018.6 356.1 M999.3 351.4 L996.7 353.1 M1020.6 356.1 L1017.0 356.7 M1022.5 350.9 L1023.0 345.3 M1050.3 357.0 L1051.5 364.9 M1046.0 342.7 L1044.7 339.6 M1053.0 359.2 L1054.2 355.0 M1051.0 334.4 L1048.8 331.3 M1063.1 331.3 L1060.4 328.3 M1056.4 345.2 L1060.2 341.2 M1060.0 338.8 L1063.3 336.7 M1062.2 334.8 L1066.1 330.9 M1040.5 346.9 L1045.6 353.2 M1038.7 347.8 L1038.0 344.4 M1051.5 369.1 L1047.6 363.7 M1047.3 358.6 L1044.3 354.9 M1046.1 371.3 L1051.3 378.2 M1048.6 376.4 L1047.1 370.5 M1068.1 359.1 L1064.9 364.7 M1066.0 367.5 L1064.0 372.6 M1070.6 359.3 L1074.6 357.8 M1064.7 367.6 L1066.7 364.7 M1060.4 365.8 L1062.7 372.8 M1064.0 388.7 L1062.4 385.1 M1063.0 381.5 L1063.3 378.4 M1064.3 393.0 L1063.0 387.7 M1044.6 376.1 L1040.0 377.2 M1117.3 324.6 L1117.6 328.7 M1116.6 331.4 L1115.3 337.4 M1107.6 372.0 L1109.1 389.0 M1118.6 325.8 L1120.6 320.6 M1117.3 336.1 L1116.1 332.4 M1115.9 341.1 L1118.2 337.9 M1111.5 359.9 L1110.6 356.6 M1110.0 384.1 L1112.0 380.7 M1100.1 336.1 L1093.8 333.5 M1106.0 340.7 L1103.0 335.4 M1102.9 357.2 L1110.2 363.3 M1109.5 364.1 L1103.1 362.9 M1116.5 383.0 L1121.5 379.8 M1106.0 387.5 L1103.5 398.7 M1105.7 395.8 L1104.9 391.6 M1114.0 390.8 L1114.0 398.4 M1112.4 399.8 L1111.4 395.9 M1086.2 398.7 L1091.7 400.9 M1167.6 370.9 L1162.7 377.3 M1152.7 387.3 L1142.8 390.4 M1138.1 389.9 L1141.3 386.8 M1159.4 382.9 L1163.3 382.9 M1131.0 389.8 L1130.2 385.8 M1126.5 387.9 L1123.8 382.4 M1082.8 503.2 L1085.0 509.4 M1086.0 515.1 L1082.0 518.5 M1145.2 480.5 L1141.3 480.9 M1065.2 433.7 L1071.8 453.7 M1081.8 478.5 L1082.7 494.1 M1064.5 413.4 L1063.3 410.3 M1064.7 421.2 L1060.7 415.9 M1072.7 452.1 L1069.4 448.9 M1067.4 435.3 L1064.5 430.7 M1081.3 492.0 L1082.2 486.6 M1046.8 406.6 L1054.1 418.3 M1056.6 419.6 L1060.8 425.2 M1048.6 421.9 L1057.3 426.2 M1050.5 423.7 L1054.7 426.7 M1051.2 426.6 L1044.8 427.9 M1080.5 457.2 L1082.4 466.4 M1075.2 443.8 L1072.0 438.7 M1073.9 439.5 L1074.8 435.2 M1072.8 435.8 L1074.6 430.6 M1071.4 431.4 L1072.4 427.6 M1080.3 465.7 L1080.9 460.5 M1079.1 459.7 L1080.7 456.5 M1065.3 451.5 L1070.4 456.2 M1075.3 464.8 L1073.4 459.0 M1077.4 470.9 L1074.6 468.6 M1075.0 463.8 L1074.8 460.1 M1084.7 496.7 L1084.6 485.9 M1089.0 463.8 L1092.9 454.9 M1096.3 452.0 L1100.9 444.2 M1097.8 442.5 L1100.8 434.9 M1105.0 434.6 L1107.9 421.3 M1103.9 419.5 L1105.7 404.5 M1086.1 475.5 L1082.4 479.2 M1105.4 420.6 L1106.7 425.5 M1097.3 423.3 L1094.6 421.5 M1092.1 429.9 L1094.5 439.1 M1094.1 430.6 L1095.0 427.4 M1093.0 445.7 L1096.2 440.4 M1095.4 401.5 L1096.4 396.7 M1099.3 416.1 L1100.2 411.0 M1089.1 461.0 L1089.4 454.3 M1105.3 461.3 L1101.0 471.5 M1101.6 451.8 L1098.3 448.8 M1102.8 464.0 L1105.9 461.4 M1109.7 407.2 L1108.3 416.2 M1107.3 418.5 L1107.1 424.8 M1108.2 421.7 L1110.4 416.1 M1110.8 438.4 L1117.1 429.0 M1121.1 413.0 L1125.8 400.6 M1097.8 460.7 L1092.5 463.0 M1110.9 441.6 L1106.5 444.0 M1121.5 417.4 L1117.0 421.5 M1120.7 420.3 L1121.3 423.3 M1123.8 410.0 L1124.8 414.8 M1123.8 412.3 L1131.8 408.9 M1122.7 410.3 L1120.5 413.7 M1115.3 427.9 L1126.0 424.3 M1114.9 426.2 L1111.0 425.2 M1109.6 431.7 L1124.0 426.4 M1127.6 429.1 L1133.8 428.9 M1125.9 427.6 L1122.3 426.2 M1103.8 442.0 L1113.2 440.2 M1111.0 442.0 L1105.6 444.3 M1136.4 424.6 L1136.4 428.0 M1135.2 427.9 L1138.4 427.1 M1134.3 425.0 L1135.1 421.5 M1092.5 495.1 L1097.4 485.8 M1099.1 480.7 L1106.9 471.5 M1119.4 459.3 L1125.5 452.6 M1129.2 449.1 L1138.4 446.3 M1097.2 487.9 L1096.8 492.3 M1102.0 479.6 L1097.3 481.7 M1119.7 461.3 L1113.8 462.3 M1126.0 454.3 L1125.6 458.6 M1132.1 450.5 L1127.8 449.9 M1099.0 469.6 L1106.6 462.6 M1105.3 466.0 L1103.4 471.5 M1112.4 458.2 L1110.4 463.5 M1127.1 439.0 L1123.9 441.4 M1122.9 445.4 L1122.1 450.5 M1129.0 434.7 L1129.2 437.9 M1127.8 435.2 L1126.6 443.8 M1125.8 437.9 L1123.6 433.5 M1129.7 460.2 L1123.9 464.1 M1119.0 466.4 L1120.4 461.3 M1093.0 491.9 L1107.2 483.9 M1126.8 480.6 L1137.1 479.2 M1097.1 491.9 L1094.3 495.2 M1121.4 479.5 L1117.4 483.7 M1116.8 480.9 L1111.7 481.1 M1130.6 478.9 L1125.4 480.7 M1120.5 486.1 L1115.8 482.0 M1128.3 476.2 L1135.4 475.4 M1122.9 479.0 L1117.9 482.5 M1091.0 470.1 L1096.7 468.9 M1091.3 468.0 L1085.8 466.2 M1088.7 478.3 L1082.1 479.0 M1224.0 275.7 L1224.8 283.4 M1225.9 286.0 L1229.0 303.3 M1229.5 303.7 L1233.3 315.4 M1253.4 342.7 L1263.9 351.5 M1287.5 381.9 L1290.6 388.8 M1230.7 311.9 L1231.1 308.6 M1283.8 376.8 L1280.2 373.7 M1217.2 279.2 L1211.3 275.9 M1210.3 301.9 L1214.2 308.5 M1228.1 315.3 L1234.0 319.4 M1210.9 310.9 L1218.6 311.5 M1216.8 313.8 L1211.0 314.9 M1213.3 313.5 L1206.9 316.0 M1216.9 324.6 L1212.8 323.7 M1258.0 343.5 L1252.7 340.3 M1265.2 346.5 L1264.1 342.0 M1261.5 341.9 L1256.5 338.5 M1268.7 363.6 L1275.7 366.8 M1275.1 364.9 L1271.0 359.6 M1272.1 363.1 L1268.7 363.3 M1279.0 357.8 L1282.7 367.9 M1275.8 320.5 L1278.0 314.3 M1277.4 343.9 L1275.5 341.3 M1277.4 337.6 L1275.3 333.4 M1276.4 351.6 L1275.7 346.0 M1266.6 311.3 L1266.1 307.3 M1279.6 318.0 L1281.0 324.4 M1282.5 326.6 L1280.0 320.3 M1281.6 317.7 L1279.0 313.4 M1288.5 320.0 L1292.3 318.8 M1273.9 325.7 L1277.1 329.3 M1292.5 336.8 L1292.3 343.8 M1291.7 346.6 L1289.9 340.0 M1295.1 343.4 L1291.3 348.0 M1295.5 345.9 L1296.8 342.0 M1282.9 346.5 L1286.4 364.3 M1355.1 337.6 L1353.1 332.4 M1347.4 376.2 L1348.8 373.5 M1342.5 341.6 L1345.0 335.8 M1347.6 363.9 L1347.9 360.0 M1345.3 357.6 L1340.0 353.3 M1344.4 361.1 L1339.4 359.8 M1346.5 367.3 L1344.4 364.9 M1381.5 378.9 L1387.0 378.0 M1392.3 384.1 L1390.1 384.1 M1316.5 511.0 L1316.9 489.7 M1318.7 493.5 L1320.4 496.1 M1318.7 495.2 L1320.4 497.9 M1317.9 484.1 L1316.6 487.3 M1329.1 489.3 L1329.5 493.6 M1320.6 509.9 L1320.9 515.3 M1319.2 480.5 L1316.6 485.5 M1330.4 481.0 L1329.0 486.7 M1293.8 395.1 L1296.3 402.1 M1305.2 423.4 L1310.5 432.4 M1313.7 436.5 L1314.0 433.3 M1320.4 478.6 L1319.1 474.6 M1320.8 461.7 L1324.2 456.3 M1306.7 421.2 L1307.1 416.8 M1307.9 418.0 L1305.1 412.5 M1294.1 422.1 L1298.2 429.7 M1303.2 432.9 L1309.2 440.2 M1297.2 425.1 L1298.2 418.6 M1312.6 445.5 L1311.2 442.1 M1293.3 431.0 L1298.4 433.2 M1293.7 429.5 L1288.3 429.4 M1301.6 439.9 L1298.5 438.9 M1300.6 455.5 L1296.5 451.2 M1297.0 445.8 L1297.1 442.0 M1304.2 461.0 L1303.3 457.0 M1314.9 479.0 L1311.7 474.4 M1304.3 462.1 L1301.1 462.0 M1300.2 459.1 L1296.4 457.6 M1292.9 462.3 L1300.3 465.3 M1292.9 464.8 L1289.4 466.0 M1308.7 457.6 L1308.4 466.4 M1307.2 467.1 L1303.6 461.9 M1306.6 461.0 L1307.7 457.7 M1317.3 478.9 L1318.4 474.1 M1314.6 461.4 L1310.8 456.1 M1325.4 459.8 L1329.5 448.5 M1332.0 440.9 L1334.0 431.9 M1339.6 417.0 L1343.5 407.4 M1341.6 397.1 L1344.3 380.4 M1322.6 464.5 L1320.5 467.4 M1323.5 459.5 L1324.1 462.5 M1340.9 407.8 L1340.8 412.0 M1340.7 408.2 L1341.2 411.3 M1345.8 382.7 L1343.4 385.8 M1344.1 394.2 L1340.6 397.5 M1342.8 402.7 L1341.4 406.2 M1332.8 424.7 L1329.9 421.9 M1331.6 422.2 L1328.0 419.2 M1337.2 398.5 L1334.2 394.9 M1332.9 388.6 L1332.5 383.4 M1339.2 413.4 L1342.3 408.4 M1338.5 404.5 L1334.1 399.6 M1338.3 392.0 L1339.3 397.0 M1341.3 398.7 L1344.4 392.6 M1335.6 400.7 L1337.5 406.6 M1331.1 434.9 L1330.9 439.7 M1337.9 422.6 L1337.6 426.9 M1334.7 435.3 L1337.5 428.4 M1332.4 463.2 L1328.0 466.6 M1340.1 456.2 L1340.8 445.8 M1346.7 408.6 L1351.9 397.2 M1337.6 465.3 L1335.5 468.3 M1337.1 469.8 L1337.6 472.8 M1338.9 448.5 L1340.6 451.4 M1338.5 455.2 L1340.0 460.9 M1340.3 435.8 L1342.0 439.0 M1349.5 408.2 L1349.2 412.3 M1359.8 387.2 L1355.2 391.7 M1359.4 386.2 L1357.4 391.2 M1362.7 387.1 L1370.0 383.8 M1372.0 381.4 L1368.4 381.3 M1362.6 385.7 L1360.0 389.8 M1361.3 392.5 L1369.1 389.5 M1356.8 401.5 L1353.6 402.0 M1346.3 428.2 L1351.0 423.0 M1350.1 421.9 L1346.9 427.8 M1350.3 435.6 L1345.7 437.2 M1344.6 413.2 L1350.7 411.6 M1369.9 407.4 L1380.3 408.7 M1332.1 464.6 L1336.2 456.3 M1333.4 475.3 L1337.1 466.8 M1364.7 442.7 L1373.5 436.2 M1373.1 432.6 L1376.1 427.3 M1338.4 469.5 L1334.6 472.0 M1334.1 478.8 L1335.1 483.6 M1361.0 444.3 L1360.3 449.7 M1389.8 421.3 L1387.8 423.6 M1381.9 425.4 L1382.7 416.9 M1379.5 413.4 L1385.7 398.0 M1384.3 408.0 L1385.3 414.2 M1382.5 412.4 L1379.5 415.4 M1388.6 389.8 L1390.9 395.8 M1382.3 409.7 L1377.4 413.9 M1353.5 447.6 L1353.4 444.5 M1335.0 401.8 L1343.5 411.0 M1313.4 448.2 L1316.8 459.2 M1314.2 455.2 L1311.3 451.8 M1315.6 459.6 L1310.9 457.2 M1314.6 458.4 L1311.2 456.0 M1600.1 310.8 L1602.2 321.0 M1597.1 351.6 L1598.5 366.0 M1602.0 367.7 L1600.0 376.0 M1599.1 378.9 L1592.1 391.7 M1601.2 333.5 L1599.1 328.5 M1601.2 330.2 L1602.9 324.9 M1601.2 322.4 L1603.3 319.5 M1600.1 361.3 L1596.8 355.6 M1599.9 356.9 L1596.6 352.1 M1598.8 372.0 L1598.3 369.0 M1607.3 299.6 L1605.5 305.4 M1604.6 309.3 L1601.3 314.1 M1614.6 288.4 L1616.1 285.0 M1592.8 294.3 L1590.1 291.5 M1592.1 312.9 L1598.5 317.5 M1595.4 317.0 L1589.6 315.0 M1637.8 320.8 L1635.3 328.7 M1616.7 359.9 L1609.4 365.5 M1637.4 318.1 L1641.4 317.0 M1633.1 327.0 L1636.7 323.7 M1631.1 332.9 L1634.6 327.7 M1624.8 349.3 L1628.4 348.5 M1612.5 360.9 L1613.7 357.5 M1604.4 368.9 L1604.7 363.0 M1642.1 341.8 L1645.2 341.6 M1633.5 348.6 L1636.7 348.4 M1638.6 347.0 L1641.7 345.1 M1640.7 354.5 L1634.5 355.1 M1620.9 362.5 L1611.7 366.2 M1622.2 371.7 L1615.0 374.5 M1643.9 369.6 L1648.9 372.0 M1596.4 391.4 L1600.9 389.4 M1620.6 365.5 L1616.3 369.9 M1617.7 370.3 L1623.3 367.9 M1622.6 365.7 L1624.3 360.8 M1598.2 394.5 L1602.9 389.8 M1604.3 371.0 L1603.4 364.5 M1599.1 387.0 L1603.4 384.5 M1600.6 383.2 L1604.4 383.3 M1583.1 377.0 L1588.5 372.9 M1579.6 373.4 L1582.9 377.8 M1551.3 368.3 L1548.8 377.0 M1555.2 354.2 L1555.5 348.6 M1548.2 372.8 L1547.3 366.7 M1558.6 345.5 L1558.3 351.3 M1532.5 365.0 L1531.3 359.1 M1530.5 362.7 L1527.0 361.8 M1543.2 358.7 L1546.4 352.7 M1539.3 362.7 L1538.0 356.3 M1508.8 379.8 L1511.5 380.3 M1465.3 395.9 L1473.2 401.6 M1484.9 411.0 L1479.5 410.6 M1469.6 405.3 L1476.4 406.2 M1473.4 407.5 L1468.2 402.8 M1558.4 505.0 L1556.2 499.7 M1558.5 498.2 L1557.8 502.7 M1554.1 489.3 L1555.3 495.1 M1555.7 492.5 L1555.3 495.5 M1558.8 501.0 L1562.0 490.0 M1561.5 499.9 L1561.9 503.3 M1563.3 487.1 L1562.1 481.0 M1560.8 480.5 L1559.6 487.1 M1489.2 415.7 L1495.2 419.9 M1509.2 426.5 L1519.4 437.6 M1522.2 438.6 L1526.6 443.3 M1527.3 448.1 L1536.3 457.6 M1496.6 419.9 L1490.6 419.6 M1514.3 434.1 L1509.1 431.1 M1520.2 439.8 L1517.8 435.6 M1537.5 457.2 L1534.3 456.1 M1543.0 464.2 L1538.3 460.9 M1548.7 477.4 L1548.4 474.1 M1546.9 472.3 L1547.8 469.1 M1494.8 401.0 L1496.6 396.6 M1494.0 409.2 L1496.0 406.6 M1494.6 411.2 L1496.9 416.0 M1496.0 418.3 L1491.2 413.5 M1493.5 413.4 L1493.1 407.1 M1500.3 413.7 L1502.5 421.3 M1502.2 413.9 L1499.9 410.0 M1516.2 436.1 L1512.5 434.0 M1546.1 426.2 L1549.8 434.5 M1547.9 438.5 L1551.6 446.1 M1553.8 452.0 L1556.9 459.7 M1557.1 462.2 L1560.4 479.1 M1543.1 424.2 L1537.1 420.7 M1545.7 429.5 L1543.4 427.2 M1549.7 437.6 L1550.5 433.7 M1554.7 450.0 L1551.4 446.9 M1560.7 476.8 L1556.5 472.0 M1521.2 395.4 L1526.1 397.8 M1518.9 396.5 L1515.3 395.6 M1506.3 396.7 L1515.0 395.5 M1519.9 387.4 L1522.2 391.4 M1521.9 389.0 L1519.5 386.0 M1513.4 404.4 L1521.6 412.8 M1522.6 412.5 L1522.3 409.4 M1519.1 408.5 L1516.5 402.7 M1514.0 403.0 L1512.8 398.1 M1516.9 402.0 L1523.8 407.4 M1520.1 402.1 L1518.6 397.8 M1523.8 413.7 L1528.9 415.5 M1523.9 411.3 L1519.2 410.9 M1524.5 428.6 L1521.4 426.6 M1532.7 425.4 L1537.5 432.2 M1538.3 435.3 L1545.7 444.7 M1554.6 457.3 L1555.8 463.6 M1534.2 424.5 L1532.4 418.1 M1541.8 436.3 L1541.3 430.6 M1555.1 465.0 L1552.1 462.2 M1557.8 475.7 L1553.4 471.0 M1556.2 469.3 L1557.2 466.0 M1530.6 419.6 L1535.6 427.7 M1536.8 430.2 L1540.3 437.3 M1551.7 450.7 L1554.3 460.4 M1541.5 434.8 L1535.5 431.6 M1539.3 430.4 L1534.4 426.3 M1549.9 451.7 L1550.2 448.2 M1536.2 415.6 L1540.2 420.2 M1545.3 425.1 L1548.4 430.5 M1547.1 432.3 L1546.6 425.9 M1542.5 425.0 L1541.4 418.8 M1535.7 436.7 L1539.5 442.4 M1545.5 445.9 L1547.6 452.3 M1549.9 464.0 L1550.0 458.0 M1541.5 425.2 L1545.7 433.1 M1544.3 433.8 L1540.5 431.3 M1530.6 435.3 L1534.9 438.6 M1539.3 450.7 L1534.2 448.1 M1550.0 425.8 L1554.8 436.4 M1560.9 450.3 L1563.3 457.1 M1546.8 397.6 L1543.6 391.9 M1546.4 416.7 L1549.2 412.1 M1547.1 406.4 L1546.0 403.4 M1549.8 428.4 L1546.3 424.4 M1556.0 441.9 L1555.9 438.6 M1560.4 452.8 L1560.2 448.9 M1548.9 388.6 L1553.8 384.9 M1548.6 417.6 L1553.1 412.6 M1542.9 407.8 L1544.3 413.3 M1543.3 415.2 L1542.3 412.2 M1539.9 406.6 L1543.0 410.7 M1553.7 435.0 L1557.6 437.7 M1578.3 381.6 L1578.4 386.3 M1580.6 401.3 L1577.7 410.8 M1571.0 427.0 L1564.1 440.2 M1564.9 441.9 L1563.4 448.3 M1579.4 389.6 L1582.0 386.2 M1563.7 438.9 L1563.3 434.9 M1562.0 445.2 L1565.1 440.8 M1560.0 479.2 L1562.4 476.1 M1560.6 462.1 L1563.5 458.3 M1561.1 449.8 L1563.3 444.4 M1575.9 387.1 L1578.2 388.8 M1577.7 412.1 L1582.3 409.3 M1587.9 413.6 L1584.6 414.9 M1583.6 415.5 L1577.3 420.6 M1573.9 420.0 L1571.2 423.5 M1588.2 413.3 L1582.7 416.3 M1565.7 424.7 L1564.9 430.3 M1571.3 440.3 L1568.3 446.1 M1578.8 425.3 L1579.3 421.7 M1575.9 429.8 L1578.8 427.4 M790.4 406.9 L794.4 402.6 M787.2 419.6 L786.7 414.4 M789.8 422.1 L793.0 417.5 M785.1 418.1 L785.8 414.2 M786.3 418.5 L789.4 414.0 M792.3 406.9 L791.3 402.3 M786.3 409.1 L785.3 405.8 M792.7 408.1 L795.0 404.8 M793.9 410.0 L793.6 405.8 M783.5 410.6 L783.7 407.5 M793.7 411.4 L791.5 406.0 M786.8 407.5 L785.6 404.4 M791.1 415.1 L791.9 411.4 M790.3 419.6 L792.2 415.4 M794.1 407.0 L795.0 403.3 M789.0 406.7 L791.1 402.5 M791.8 416.2 L793.6 410.7 M792.4 415.1 L792.4 409.3 M512.0 395.5 L511.0 390.4 M516.5 408.5 L517.6 402.8 M515.2 403.7 L515.0 398.4 M511.5 395.6 L512.3 390.3 M511.0 409.4 L512.5 406.4 M510.1 404.8 L508.9 399.1 M517.0 403.7 L518.7 399.1 M512.6 393.4 L512.5 389.2 M516.6 402.9 L518.8 398.1 M513.7 398.7 L512.7 394.4 M512.2 408.5 L512.2 404.5 M510.6 401.1 L508.8 398.3 M509.4 403.1 L511.4 398.5 M513.7 406.9 L511.4 403.5 M511.1 407.9 L508.8 403.9 M1122.8 404.1 L1124.0 401.0 M1122.4 413.7 L1124.3 411.0 M1120.1 414.7 L1124.7 412.2 M1128.7 400.5 L1133.4 397.5 M1131.6 401.1 L1133.9 397.6 M1118.3 410.2 L1120.7 407.0 M1118.7 415.8 L1121.8 411.0 M1118.1 417.5 L1117.8 413.1 M1121.5 410.9 L1125.8 408.5 M1122.0 408.2 L1124.6 403.8 M1117.1 413.2 L1116.9 407.8 M1117.1 405.9 L1119.9 403.5 M1126.4 397.6 L1129.5 394.2 M1127.5 401.3 L1130.8 396.5 M1121.1 403.9 L1122.6 400.2 M1131.6 398.8 L1134.4 394.3 M1121.7 403.5 L1124.7 401.7 M1129.0 404.4 L1132.0 399.5 M1121.7 398.3 L1122.0 394.9 M1119.2 408.8 L1121.1 406.0 M1127.1 406.9 L1127.5 401.5 M1131.2 399.9 L1135.8 397.1 M1123.5 415.1 L1123.6 409.8 M1125.1 409.9 L1129.7 406.2 M1117.7 412.2 L1121.0 410.1 M1123.5 410.6 L1127.2 407.7 M1091.9 454.5 L1093.2 451.4 M1087.2 466.1 L1089.0 463.3 M1092.6 470.2 L1093.0 466.9 M1086.9 468.2 L1088.6 463.1 M1086.7 471.4 L1086.5 468.2 M1098.8 452.3 L1100.5 449.5 M1087.6 465.3 L1090.6 462.3 M1095.9 449.5 L1096.5 445.8 M1093.2 468.8 L1096.1 465.3 M1097.8 453.0 L1098.6 449.2 M1087.2 467.4 L1087.3 463.4 M1086.1 470.7 L1088.2 466.8 M1086.6 472.6 L1089.9 469.8 M1089.3 471.8 L1089.5 468.0 M1087.5 460.4 L1089.7 457.7 M1086.5 474.6 L1087.9 470.7 M1094.2 451.6 L1096.8 447.0 M1095.2 468.0 L1095.8 463.4 M1090.1 459.7 L1091.9 454.2 M1087.3 474.1 L1086.8 468.4 M1090.0 472.4 L1091.5 466.6 M1096.8 460.0 L1099.3 457.3 M1095.1 462.2 L1096.0 458.7 M1093.2 469.3 L1092.3 463.4 M1090.1 457.6 L1091.2 453.0 M1094.8 459.0 L1094.4 455.8 M1091.4 464.3 L1093.1 458.6 M1092.5 457.7 L1093.3 454.3 M1096.1 466.2 L1097.7 462.3 M1091.0 456.1 L1092.4 452.0 M1096.8 465.6 L1096.8 462.5 M1089.6 456.5 L1093.2 452.2 M1086.3 468.3 L1087.6 463.9 M1096.8 450.1 L1095.9 445.2 M1095.3 459.6 L1099.4 456.0 M1093.9 449.8 L1095.9 445.3 M1096.3 449.7 L1099.2 445.8 M1090.0 459.7 L1090.1 456.1 M1085.4 469.0 L1086.9 464.1 M1087.3 469.4 L1089.6 465.0 M1090.2 463.2 L1090.1 457.3 M1093.6 463.6 L1095.3 460.7 M1338.8 405.5 L1340.3 402.9 M1338.9 415.8 L1341.1 411.1 M1338.5 405.5 L1339.8 401.9 M1342.5 407.8 L1344.4 403.5 M1335.2 410.3 L1335.1 404.9 M1338.6 405.2 L1340.6 401.0 M1342.6 410.1 L1340.2 405.3 M1533.4 428.9 L1530.2 427.1 M1545.0 436.4 L1543.8 432.2 M1544.3 432.5 L1541.0 429.3 M1543.4 435.6 L1540.5 432.9 M1528.7 414.5 L1525.6 410.4 M1533.4 415.7 L1532.9 412.4 M1535.5 413.6 L1532.5 411.3 M1534.2 419.6 L1534.3 413.8 M1539.2 438.5 L1538.2 433.9 M1532.4 422.7 L1529.3 419.8 M1539.5 418.8 L1534.6 415.9 M1529.7 419.2 L1526.5 416.7 M1526.9 419.1 L1523.7 415.6 M1533.8 421.4 L1531.7 416.5 M1538.5 420.8 L1538.8 415.4 M1538.5 426.7 L1536.4 424.0 M1545.4 429.2 L1540.8 425.8 M1536.3 417.2 L1534.2 412.1 M1535.8 429.0 L1534.9 425.5 M1538.5 424.4 L1539.0 420.9 M1528.1 415.8 L1524.6 412.9 M1538.4 440.9 L1534.5 438.0 M1538.5 439.5 L1535.8 434.4 M1533.9 425.5 L1534.3 421.4 M1534.5 431.7 L1534.7 428.4 M1547.8 435.4 L1547.1 430.7 M1537.2 441.0 L1536.5 437.1 M1539.1 423.5 L1538.6 420.4 M1542.2 420.8 L1541.9 416.4 M1539.0 418.7 L1537.9 415.8 M1530.5 412.9 L1530.4 407.9 M1545.2 445.6 L1545.7 439.8 M1535.5 438.3 L1534.7 433.5 M1538.8 431.8 L1538.5 428.0 M1536.4 415.9 L1532.0 412.2 M1541.8 429.8 L1538.5 427.2 M1529.1 412.6 L1529.6 409.3 M1540.7 426.4 L1539.2 423.3 M1543.4 438.8 L1539.0 435.3 M1532.8 420.1 L1529.8 417.0 M1541.3 429.5 L1541.4 425.0 M1546.7 445.5 L1544.5 443.4 M1532.3 422.5 L1528.9 419.8 M1544.4 441.8 L1543.3 436.7 M1538.3 419.1 L1537.6 415.5 M1540.4 431.1 L1540.0 427.6 M1541.4 440.8 L1540.9 434.9 M1527.5 420.2 L1523.3 417.1 M1544.1 431.6 L1543.6 427.1 M1546.2 442.7 L1544.9 437.9 M1539.2 427.2 L1538.5 422.5 M1531.4 427.9 L1529.1 424.2 M1536.5 422.6 L1534.1 419.0 M1544.4 445.9 L1541.9 444.1 M1539.4 422.7 L1537.0 418.5 M1531.5 419.5 L1526.7 416.6 M1540.6 417.2 L1538.7 413.7 M1538.3 416.3 L1534.9 412.6 M1541.7 424.8 L1539.7 421.8 M1548.6 439.0 L1548.6 435.7 M1547.8 444.8 L1547.0 440.5 M1533.8 410.8 L1533.4 405.9 M1544.4 442.3 L1544.8 437.5 M1533.8 434.0 L1531.8 430.8 M1548.2 433.3 L1545.3 431.0 M1537.0 431.7 L1534.4 428.3 M1537.0 414.4 L1536.2 410.4 M1537.4 433.0 L1534.0 430.4 M1542.2 432.1 L1540.3 429.6 M1533.6 432.8 L1530.7 430.2 M1546.7 441.6 L1545.1 438.2 M1535.3 419.3 L1534.9 415.9 M1533.5 427.4 L1533.6 424.0 M1527.2 416.9 L1524.3 414.1 M1541.0 438.1 L1538.6 434.3 M1541.3 438.6 L1541.4 434.3 M1539.7 416.1 L1540.3 411.5 M1538.6 422.5 L1536.3 419.9 M1541.1 420.3 L1540.2 416.0 M1533.3 417.3 L1530.3 414.6 M1541.4 428.3 L1536.9 425.7 M1529.5 412.9 L1527.1 410.3 M1543.5 427.6 L1541.2 424.6 M1531.2 421.5 L1528.0 417.2 M1545.6 433.1 L1545.7 428.2 M1529.0 421.6 L1526.7 416.6 M1538.0 424.9 L1533.9 420.6 M1538.9 420.5 L1533.9 417.3 M1540.5 442.2 L1536.6 439.2 M1542.7 443.0 L1540.6 440.5 M1539.0 441.1 L1539.6 436.2 M1536.8 418.9 L1534.7 416.4 M1537.0 421.8 L1533.8 418.9 M1539.8 415.9 L1536.1 412.7 M1540.4 427.3 L1536.3 423.5 M1534.5 430.3 L1532.4 426.2 M1548.1 440.6 L1546.7 437.9 M1529.2 416.4 L1527.4 411.3 M1529.1 423.2 L1528.9 418.1 M1535.6 437.4 L1535.2 433.2 M1535.8 436.1 L1533.7 433.5 M1531.5 426.8 L1528.2 424.2 M1539.6 429.5 L1536.8 425.0 M1529.1 424.7 L1529.5 419.2 M1548.7 434.6 L1546.6 429.7 M1532.4 413.7 L1530.2 411.3 M1540.3 419.0 L1537.9 415.1 M1535.8 438.2 L1535.3 432.8 M1540.3 418.8 L1536.3 415.4 M1538.5 422.0 L1536.5 419.2 M1052.1 358.2 L1052.0 354.2 M1048.8 360.8 L1048.2 355.2 M1050.4 364.0 L1047.7 359.2 M1052.3 360.2 L1050.3 357.0 M1055.2 364.3 L1053.3 361.7 M1050.6 360.9 L1049.2 356.9 M1047.2 352.3 L1047.6 349.0 M1048.7 364.3 L1047.4 359.0 M1054.8 367.3 L1052.3 365.5 M1050.2 366.0 L1046.9 362.8 M1049.3 352.8 L1047.3 347.5 M1051.0 357.3 L1049.4 353.9" stroke="#fff" stroke-width="1" fill="none" shape-rendering="crispEdges"/>
</svg>

<div class="a" style="left:0;top:768px;width:1683px;height:3px;background:#2b323d"></div>
<div class="a" style="left:0;top:771px;width:1683px;height:37px;background:#c8c8c8"></div>
<div class="a" style="left:0;top:808px;width:1683px;height:1px;background:#2b323d"></div>
<div class="a" style="left:19px;top:809px;width:1664px;height:20px;background:#fff"></div>
<div class="a" style="left:0;top:771px;width:19px;height:58px;background:#2b323d"></div>
<div class="a" style="left:0;top:794px;width:19px;height:1px;background:#3a4250"></div><div class="a" style="left:1px;top:795px;width:2px;height:1px;background:#9aa0a8"></div><div class="a" style="left:8px;top:795px;width:2px;height:1px;background:#9aa0a8"></div>
<span class="a" style="left:330px;top:777px;font-family:'Liberation Mono',monospace;font-size:11.6px;line-height:14px;color:#000">Local\Temp\TLLSystemGenerator_1_18094_e16a07f7.sv$ ...</span>
<span class="a" style="left:21px;top:792px;font-family:'Liberation Mono',monospace;font-size:11.6px;line-height:14px;color:#000">Command:</span>
<span class="a" style="left:56px;top:812px;font-family:'Liberation Mono',monospace;font-size:11.6px;line-height:14px;color:#8a8a8a;font-style:italic">Type a command</span>
<svg class="a" style="left:22px;top:812px" width="30" height="14" viewBox="0 0 30 14">
  <rect x="1.5" y="1.5" width="14" height="10" fill="#fff" stroke="#555" stroke-width="1"/>
  <rect x="1.5" y="1.5" width="14" height="2" fill="#555"/>
  <path d="M4 6 L6 7.5 L4 9 M7 9.5 H10" stroke="#333" stroke-width="0.9" fill="none"/>
  <path d="M19 5 L25 5 L22 8.5 Z" fill="#555"/>
</svg>
<svg class="a" style="left:-1px;top:804px" width="16" height="22" viewBox="0 0 16 22">
  <path d="M1 19 L9 10" stroke="#d8dce2" stroke-width="2.2"/>
  <path d="M8 11 C6.5 8 8 5 11 4.5 L10 7.5 L12 9 L14.5 7 C14.5 10 12 12 9.5 11.5 Z" fill="#d8dce2"/>
</svg>

<div class="a" style="left:0;top:829px;width:1683px;height:30px;background:#222933"></div>
<div class="a" style="left:0;top:859px;width:1683px;height:1px;background:#3a3d42"></div>
<div class="a" style="left:0;top:860px;width:1683px;height:12px;background:#202020"></div>
<div class="a" style="left:73px;top:870px;width:3px;height:2px;background:#e6c84a"></div>
<div class="a" style="left:163px;top:870px;width:3px;height:2px;background:#7a5ac8"></div>
<div class="a" style="left:191px;top:870px;width:24px;height:2px;background:#f0f0f0"></div>
<div class="a" style="left:236px;top:870px;width:14px;height:2px;background:#9a9a9a"></div>
<div class="a" style="left:257px;top:870px;width:2px;height:2px;background:#c83a3a"></div>
<div class="a" style="left:283px;top:870px;width:16px;height:2px;background:#3a6a78"></div>
<svg class="a" style="left:0;top:829px" width="230" height="20" viewBox="0 0 230 20">
  <path d="M5 0 L62 0 L58 14 C57 18 55 19 52 19 L14 19 C11 19 10 18 9 14 Z" fill="#3b4453"/>
  <path d="M65 0 L128 0 L124 14 C123 18 121 19 118 19 L75 19 C72 19 71 18 70 14 Z" fill="#2a313c"/>
  <path d="M130 0 L195 0 L191 14 C190 18 188 19 185 19 L140 19 C137 19 136 18 135 14 Z" fill="#2a313c"/>
  <path d="M198 0 L220 0 L216 14 C215 18 213 19 210 19 L203 19 Z" fill="#2a313c"/>
</svg>
<span class="a" style="left:17px;top:832px;color:#fff;font-weight:bold;font-size:12px;line-height:14px">Model</span>
<span class="a" style="left:75px;top:832px;color:#c9ced6;font-size:12px;line-height:14px">Layout1</span>
<span class="a" style="left:140px;top:832px;color:#c9ced6;font-size:12px;line-height:14px">Layout2</span>
<svg class="a" style="left:204px;top:834px" width="10" height="10" viewBox="0 0 10 10"><path d="M5 0.5 V9.5 M0.5 5 H9.5" stroke="#c9ced6" stroke-width="1.6"/></svg>

<div class="sb" style="left:1122px;width:180px"></div>
<span class="a" style="left:1150px;top:836px;color:#eef0f3;font-size:12px;line-height:15px;letter-spacing:-0.1px">170.0440, 184.9319, 0.0000</span>
<div class="sb" style="left:1305px;width:47px"></div>
<span class="a" style="left:1308px;top:836px;color:#eef0f3;font-size:12.5px;line-height:15px;letter-spacing:-0.2px">MODEL</span>
<div class="sb" style="left:1355px;width:64px"></div>
<div class="sb" style="left:1422px;width:24px"></div>
<div class="sb" style="left:1448px;width:102px"></div>
<div class="sb" style="left:1472px;width:22px;background:#4a7ebb"></div>
<div class="sb" style="left:1553px;width:63px"></div>
<div class="sb" style="left:1553px;width:22px;background:#4a7ebb"></div>
<div class="sb" style="left:1577px;width:22px;background:#4a7ebb"></div>
<div class="sb" style="left:1619px;width:64px"></div>
<div class="sb" style="left:1619px;width:22px;background:#4a7ebb"></div>
<svg class="a" style="left:1355px;top:832px" width="328" height="23" viewBox="1355 832 328 23" fill="none" stroke="#e6e8ec" stroke-width="1.2">
  <path d="M1361 839.5 H1374 M1361 843.5 H1374 M1361 847.5 H1374 M1364.5 836 V851 M1368.5 836 V851 M1372.5 836 V851" stroke-width="1.1"/>
  <path d="M1385 838h1.6M1389 838h1.6M1393 838h1.6 M1385 843h1.6M1389 843h1.6M1393 843h1.6 M1385 848h1.6M1389 848h1.6M1393 848h1.6" stroke-width="1.6"/>
  <path d="M1407 842 L1414 842 L1410.5 846 Z" fill="#e6e8ec" stroke="none"/>
  <path d="M1426 836 V842 M1423 839 H1429" />
  <rect x="1429" y="843" width="8" height="4" fill="#e6e8ec" stroke="none"/>
  <path d="M1451.5 837 V851.5 H1467 M1451.5 847.5 H1455 V851.5"/>
  <circle cx="1482.5" cy="844" r="5.5" stroke="#fff"/><path d="M1481 845 L1489 837" stroke="#fff"/>
  <path d="M1498 842 L1505 842 L1501.5 846 Z" fill="#e6e8ec" stroke="none"/>
  <path d="M1516 835 L1527 852" stroke="#e0606a"/><path d="M1522 835 V852" stroke="#46c25a"/>
  <circle cx="1522" cy="843.5" r="1.3" fill="#fff" stroke="none"/>
  <path d="M1538 842 L1545 842 L1541.5 846 Z" fill="#e6e8ec" stroke="none"/>
  <path d="M1556 851.5 H1571 M1557 851 L1570 839" stroke="#fff"/><circle cx="1563.5" cy="845" r="1.5" fill="#fff" stroke="none"/>
  <rect x="1581.5" y="838.5" width="15" height="13" stroke="#fff"/><rect x="1579.5" y="836.5" width="4" height="4" fill="#4a7ebb" stroke="#fff"/>
  <path d="M1604 842 L1611 842 L1607.5 846 Z" fill="#e6e8ec" stroke="none"/>
  <path d="M1630 837 L1636 852 L1630 847 L1624 852 Z" fill="#fff" stroke="none"/><circle cx="1637" cy="838" r="2.2" stroke="#fff"/>
  <path d="M1654 837 L1660 852 L1654 847 L1648 852 Z" fill="#c9ced6" stroke="none"/><path d="M1660 836 L1658 840 L1662 840 L1660 844" stroke="#c9ced6"/>
  <path d="M1678 837 L1684 852 L1678 847 L1672 852 Z" fill="#c9ced6" stroke="none"/>
</svg>

<div id="palstrip"></div><div id="pal"></div>
<div id="palin"></div>
<!-- left strip icons -->
<svg class="a" style="left:0;top:176px" width="19" height="618" viewBox="0 0 19 618">
  <path d="M2.5 7.5 L10 15 M10 7.5 L2.5 15" stroke="#c9ced6" stroke-width="2"/>
  <path d="M3 25 V36" stroke="#c9ced6" stroke-width="1.6"/><path d="M10 26 V35 L5.5 30.5 Z" fill="#c9ced6"/>
  <g transform="translate(6.5,49)" stroke="#c9ced6" stroke-width="1.6" fill="none"><circle r="2.6"/><path d="M0 -6V-3.5 M0 3.5V6 M-6 0H-3.5 M3.5 0H6 M-4.2 -4.2L-2.4 -2.4 M2.4 2.4L4.2 4.2 M-4.2 4.2L-2.4 2.4 M2.4 -2.4L4.2 -4.2"/></g>
  <g transform="translate(7,609)" fill="#3fae4f"><circle cx="0" cy="-7" r=".9"/><circle cx="-2.3" cy="-4.7" r=".9"/><circle cx="2.3" cy="-4.7" r=".9"/><circle cx="-4.7" cy="-2.3" r=".9"/><circle cx="0" cy="-2.3" r=".9"/><circle cx="4.7" cy="-2.3" r=".9"/><circle cx="-7" cy="0" r=".9"/><circle cx="-2.3" cy="0" r=".9"/><circle cx="2.3" cy="0" r=".9"/><circle cx="7" cy="0" r=".9"/><circle cx="-4.7" cy="2.3" r=".9"/><circle cx="0" cy="2.3" r=".9"/><circle cx="4.7" cy="2.3" r=".9"/><circle cx="-2.3" cy="4.7" r=".9"/><circle cx="2.3" cy="4.7" r=".9"/><circle cx="0" cy="7" r=".9"/></g>
</svg>
<span class="a" style="left:-64px;top:692px;width:140px;color:#c9ced6;font-size:10.6px;line-height:13px;transform:rotate(-90deg);text-align:center;letter-spacing:-0.1px">TL L-SYSTEM GENERATOR</span>
<!-- right tabs -->
<svg class="a" style="left:326px;top:178px" width="24" height="246" viewBox="0 0 24 246">
  <path d="M0 122 L0 1 L19 1 Q22.5 1 22.5 4.5 L22.5 118 Q22.5 121 19.5 121 Z" fill="#3b4453"/>
  <path d="M3 243 L3 126 Q3 122 6 122 L19.5 122 Q22.5 122 22.5 125 L22.5 240 Q22.5 243 19.5 243 Z" fill="#2c333f"/>
</svg>
<span class="a" style="left:310px;top:232px;width:60px;text-align:center;color:#fff;font-size:12px;line-height:14px;transform:rotate(-90deg)">L-System</span>
<span class="a" style="left:310px;top:353px;width:60px;text-align:center;color:#c9ced6;font-size:12px;line-height:14px;transform:rotate(-90deg)">Grammar</span>

<span class="t" style="left:25px;top:193px">Presets / Name</span>
<div class="inp" style="left:23px;top:215px;width:299px;height:23px;border-color:#7a7a7a;border-radius:2px"></div>
<svg class="a" style="left:307px;top:222px" width="11" height="8" viewBox="0 0 11 8"><path d="M1 2 L5.5 6.5 L10 2" stroke="#333" stroke-width="1" fill="none"/></svg>
<span class="t" style="left:25px;top:243px">Axiom</span>
<div class="inp" style="left:23px;top:265px;width:299px;height:23px;border-color:#e6e6e6;border-bottom:1px solid #8a8a8a"></div>
<span class="t" style="left:26px;top:269px">X</span>
<span class="t" style="left:25px;top:293px">Rules</span>
<div class="inp" style="left:23px;top:315px;width:299px;height:106px;border-color:#e0e0e0;border-bottom:1px solid #8a8a8a"></div>
<div class="a" style="left:304px;top:317px;width:16px;height:102px;background:#f0f0f0"></div>
<svg class="a" style="left:304px;top:317px" width="16" height="102" viewBox="0 0 16 102"><path d="M3.5 12 L8 7 L12.5 12 Z M3.5 90 L8 95 L12.5 90 Z" fill="#a3a3a3"/></svg>
<span class="t" style="left:26px;top:319px;line-height:15px">F=FF<br>X?60=F-[[X]+X]+F[+FX]-X<br>X?40=F+[[X]-X]-F[-FX]+X</span>
<span class="t" style="left:147px;top:426px">* Press Ctrl+Enter for a new line</span>

<span class="t" style="left:49px;top:451px">Generations</span>
<div class="inp" style="left:125px;top:448px;width:197px;height:23px"><span class="num">4</span><div class="spin" style="right:1px;top:1px"><i></i></div></div>

<span class="t" style="left:26px;top:478px">Angle [Deg]</span>
<span class="t" style="left:129px;top:478px">Variance [Deg]</span>
<span class="t" style="left:231px;top:478px">Increment [Deg]</span>
<div class="inp" style="left:23px;top:498px;width:94px;height:23px"><span class="num">22.5</span><div class="spin" style="right:1px;top:1px"><i></i></div></div>
<div class="inp" style="left:125px;top:498px;width:94px;height:23px"><span class="num">10.0</span><div class="spin" style="right:1px;top:1px"><i></i></div></div>
<div class="inp" style="left:227px;top:498px;width:95px;height:23px"><span class="num">0.0</span><div class="spin" style="right:1px;top:1px"><i></i></div></div>

<span class="t" style="left:26px;top:528px">Line Length</span>
<span class="t" style="left:129px;top:528px">Variance</span>
<span class="t" style="left:230px;top:528px">Scale</span>
<div class="inp" style="left:23px;top:548px;width:94px;height:23px"><span class="num">1.000</span><div class="spin" style="right:1px;top:1px"><i></i></div></div>
<div class="inp" style="left:125px;top:548px;width:94px;height:23px"><span class="num">0.500</span><div class="spin" style="right:1px;top:1px"><i></i></div></div>
<div class="inp" style="left:227px;top:548px;width:95px;height:23px"><span class="num">1.000</span><div class="spin" style="right:1px;top:1px"><i></i></div></div>

<div class="cb" style="left:23px;top:581px"></div>
<span class="t" style="left:40px;top:580px">Draw on screen in realtime</span>

<span class="t" style="left:42px;top:610px">Delay [msecs]</span>
<div class="inp" style="left:125px;top:605px;width:197px;height:23px;background:#f0f0f0;border-color:#cccccc"><span class="num" style="color:#8a8a8a;top:2px">100</span><div class="spin" style="right:1px;top:1px;border-color:#e2e2e2;opacity:.45"><i></i></div></div>

<div class="cb" style="left:23px;top:638px;background:#005fb8;border-color:#005fb8"></div>
<svg class="a" style="left:23px;top:638px" width="13" height="13" viewBox="0 0 13 13"><path d="M3 6.5 L5.5 9 L10 4" stroke="#fff" stroke-width="1.2" fill="none"/></svg>
<span class="t" style="left:40px;top:637px">Group generated objects</span>

<div class="cb" style="left:23px;top:666px"></div>
<span class="t" style="left:40px;top:665px">Output debug info to command line</span>

<div class="btn" style="left:24px;top:691px;width:297px;height:25px">Draw</div>
<div class="btn" style="left:24px;top:724px;width:297px;height:25px">Copy output string to clipboard</div>
<div class="btn" style="left:24px;top:757px;width:143px;height:25px">Load from XML</div>
<div class="btn" style="left:177px;top:757px;width:144px;height:25px">Save to XML</div>

</body></html>
